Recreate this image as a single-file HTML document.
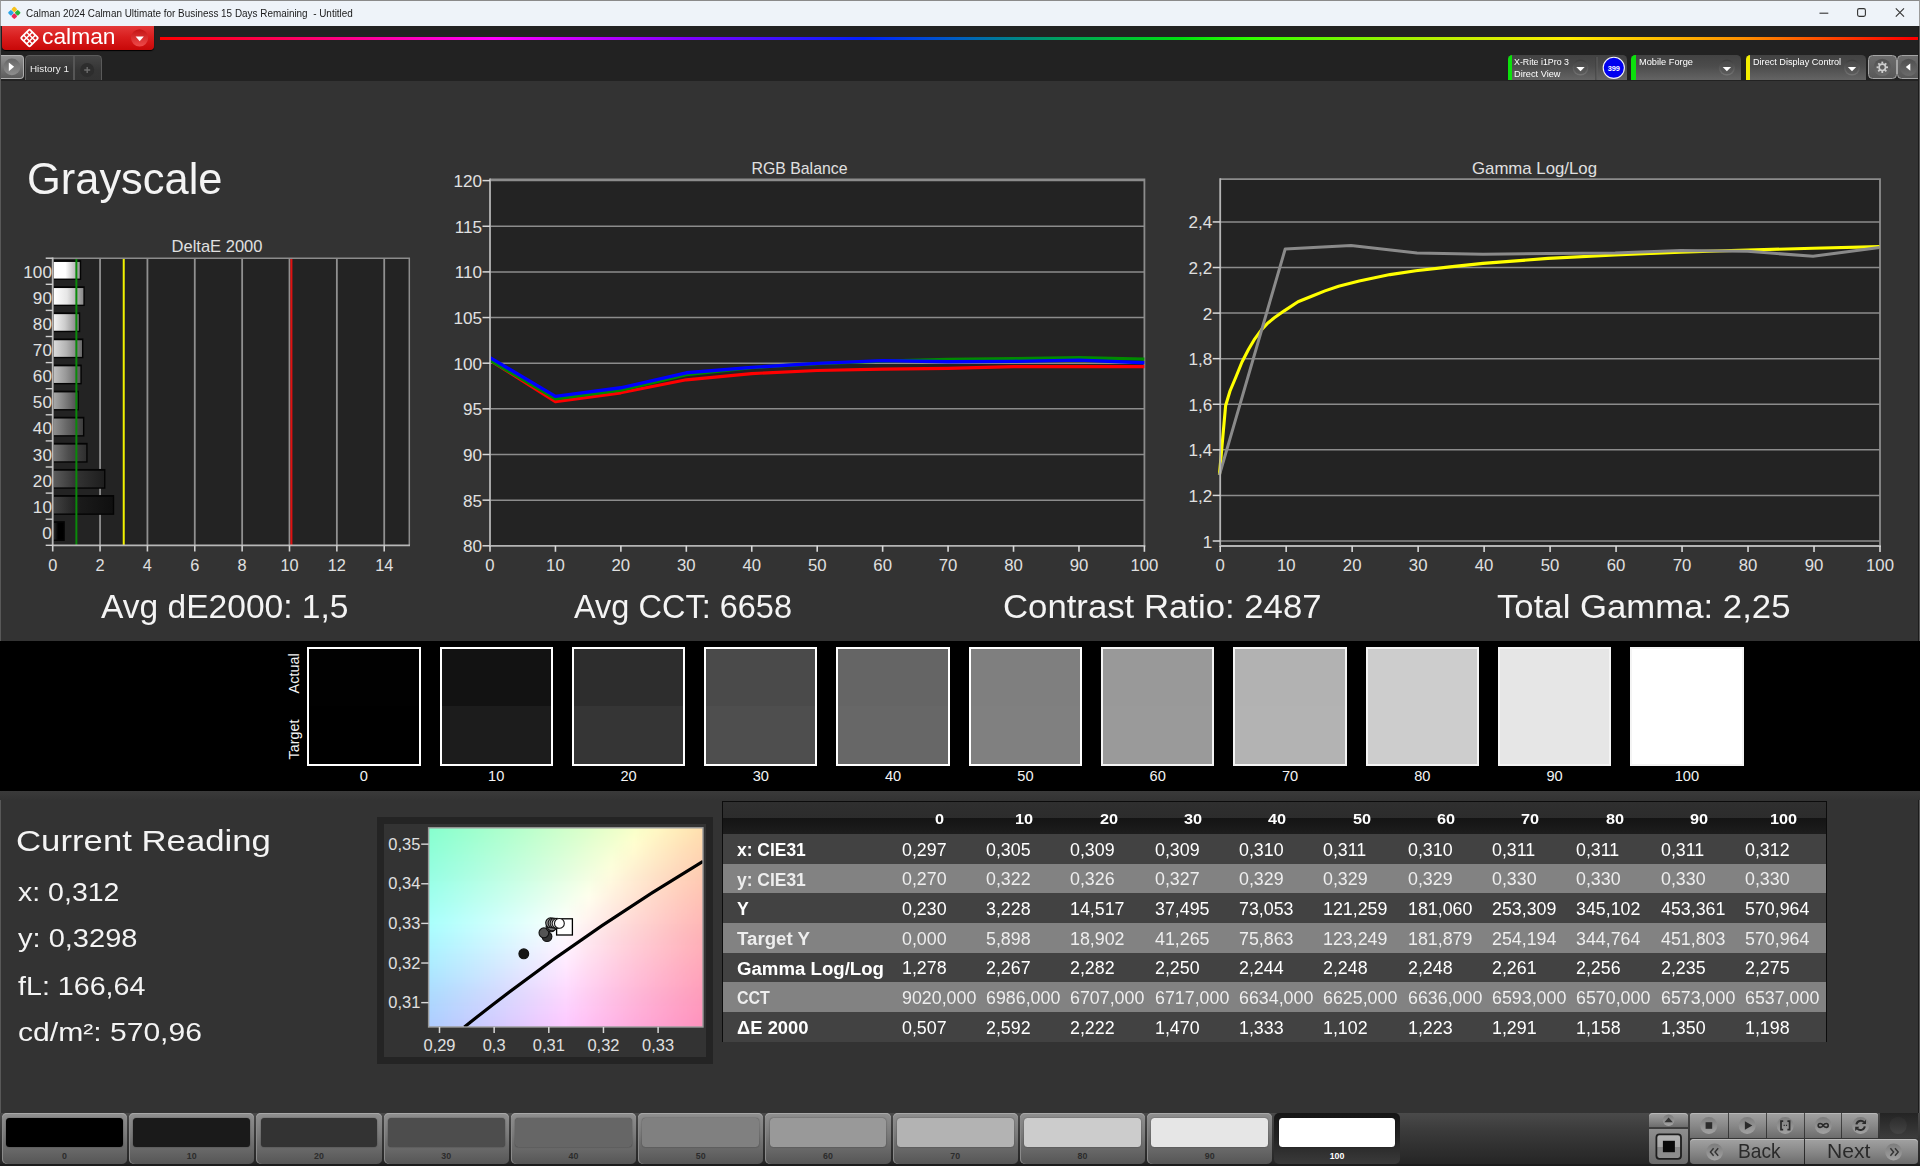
<!DOCTYPE html>
<html lang="en"><head><meta charset="utf-8"><title>Calman 2024 Calman Ultimate for Business - Untitled</title>
<style>
html,body{margin:0;padding:0;background:#333333;}
body{width:1920px;height:1166px;overflow:hidden;position:relative;font-family:"Liberation Sans",sans-serif;}
.t{position:absolute;white-space:pre;line-height:1;transform-origin:0 0;display:block;}
.ov{position:absolute;left:0;top:0;overflow:visible;}
svg text{font-family:"Liberation Sans",sans-serif;}
</style></head><body>
<!-- title bar -->
<div style="position:absolute;left:0.00px;top:0.00px;width:1920.00px;height:26.00px;background:#eef3f9;border-top:1px solid #8a8a8a;border-left:1px solid #9c9c9c;border-right:1px solid #9c9c9c;box-sizing:border-box;"></div>
<svg class="ov" width="1920" height="1166" viewBox="0 0 1920 1166">
<g transform="translate(14.3,12.8) rotate(45)">
<rect x="-4.6" y="-4.6" width="4.4" height="4.4" rx="1" fill="#f6c21c"/>
<rect x="0.2" y="-4.6" width="4.4" height="4.4" rx="1" fill="#2bb43a"/>
<rect x="-4.6" y="0.2" width="4.4" height="4.4" rx="1" fill="#2aa5e8"/>
<rect x="0.2" y="0.2" width="4.4" height="4.4" rx="1" fill="#ea2a5c"/>
</g>
<path d="M1819.5 13.2h8.8" stroke="#333" stroke-width="1.1" fill="none"/>
<rect x="1857.6" y="8.6" width="7.8" height="7.8" rx="1.6" fill="none" stroke="#333" stroke-width="1.1"/>
<path d="M1895.8 8.4l8.2 8.2M1904 8.4l-8.2 8.2" stroke="#333" stroke-width="1.1" fill="none"/>
</svg>
<span class="t" style="left:26.00px;top:6.98px;font-size:11.60px;color:#1a1a1a;transform:scaleX(0.8553);">Calman 2024 Calman Ultimate for Business 15 Days Remaining  - Untitled</span>
<!-- header band -->
<div style="position:absolute;left:0.00px;top:26.00px;width:1920.00px;height:54.60px;background:#222222;"></div>
<div style="position:absolute;left:160.00px;top:36.60px;width:1760.00px;height:3.20px;background:linear-gradient(90deg,#ff0000 0%,#ff0080 10%,#ff00ff 19%,#8000ff 30%,#0020ff 40%,#0060c0 45.5%,#00a060 51%,#00e010 58%,#30ff00 62%,#b0f000 72%,#ffee00 80%,#ff9000 90%,#ff0000 99.5%);"></div>
<div style="position:absolute;left:1.50px;top:26.00px;width:152.00px;height:24.30px;background:linear-gradient(180deg,#e43a3a 0%,#d81c1c 50%,#c80808 100%);border-radius:0 0 4px 4px;box-shadow:0 1px 1px #000;"></div>
<svg class="ov" width="1920" height="1166" viewBox="0 0 1920 1166">
<defs><linearGradient id="cdd" x1="0" y1="0" x2="0" y2="1"><stop offset="0" stop-color="#c41414"/><stop offset="1" stop-color="#ee4a4a"/></linearGradient></defs>
<g transform="translate(29.5,38) rotate(45)" fill="none" stroke="#fff">
<rect x="-6.2" y="-6.2" width="12.4" height="12.4" rx="1.2" stroke-width="1.8"/>
<path d="M-2.1 -6v12M2.1 -6v12M-6 -2.1h12M-6 2.1h12" stroke-width="1.5"/>
</g>
<circle cx="139.6" cy="37.8" r="8.6" fill="url(#cdd)"/>
<path d="M135.6 36.6h8.2l-4.1 4.6z" fill="#fff"/>
</svg>
<span class="t" style="left:41.80px;top:26.78px;font-size:21.40px;color:#fff;transform:scaleX(1.0668);">calman</span>
<div style="position:absolute;left:0.80px;top:55.00px;width:22.80px;height:24.00px;background:linear-gradient(180deg,#909090,#5c5c5c);border-radius:0 4px 4px 0;border:1px solid #b0b0b0;border-left:none;box-sizing:border-box;"></div>
<div style="position:absolute;left:25.00px;top:55.30px;width:77.30px;height:24.90px;background:linear-gradient(180deg,#454545,#353535 60%,#333);border-radius:4.5px 4.5px 0 0;border:1.4px solid #5a5a5a;border-bottom:none;box-sizing:border-box;"></div>
<div style="position:absolute;left:72.80px;top:56.40px;width:2.00px;height:23.80px;background:#565656;"></div>
<svg class="ov" width="1920" height="1166" viewBox="0 0 1920 1166">
<defs><linearGradient id="pl" x1="0" y1="0" x2="0" y2="1"><stop offset="0" stop-color="#666"/><stop offset="1" stop-color="#8e8e8e"/></linearGradient></defs>
<circle cx="11.9" cy="66.9" r="8.4" fill="url(#pl)"/>
<path d="M8.8 62.4v8.8l5.3-4.4z" fill="#fff"/>
<circle cx="87.2" cy="70" r="7" fill="#2d2d2d"/>
<path d="M84.2 70h6M87.2 67v6" stroke="#6c6c6c" stroke-width="1.4"/>
</svg>
<span class="t" style="left:30.40px;top:64.04px;font-size:9.40px;color:#f0f0f0;transform:scaleX(1.0516);">History 1</span>
<svg class="ov" width="1920" height="1166" viewBox="0 0 1920 1166"><defs><linearGradient id="dd" x1="0" y1="0" x2="0" y2="1"><stop offset="0" stop-color="#3a3a3a"/><stop offset="1" stop-color="#7a7a7a"/></linearGradient><linearGradient id="dd2" x1="0" y1="0" x2="0" y2="1"><stop offset="0" stop-color="#4a4a4a"/><stop offset="1" stop-color="#585858"/></linearGradient></defs></svg>
<div style="position:absolute;left:1507.70px;top:55.10px;width:119.30px;height:25.00px;background:linear-gradient(180deg,#424242 0%,#4c4c4c 45%,#646464 100%);border-radius:4.5px 4.5px 0 0;overflow:hidden;"><div style="position:absolute;left:0;top:0;width:4.4px;height:100%;background:#0ce00c;"></div></div>
<span class="t" style="left:1514.10px;top:56.77px;font-size:9.60px;color:#ffffff;transform:scaleX(0.9204);">X-Rite i1Pro 3</span>
<span class="t" style="left:1514.10px;top:69.07px;font-size:9.60px;color:#ffffff;transform:scaleX(0.9613);">Direct View</span>
<svg class="ov" width="1920" height="1166" viewBox="0 0 1920 1166"><circle cx="1580.5" cy="67.5" r="8.0" fill="url(#dd)" opacity="0.8"/><circle cx="1580.5" cy="67.5" r="6.6" fill="url(#dd2)" opacity="0.9"/><path d="M1576.3 67.1h8.4l-4.2 4.2z" fill="#fff"/><path d="M1596 57v23" stroke="#3c3c3c" stroke-width="1"/><path d="M1597 57v23" stroke="#606060" stroke-width="1"/></svg>
<div style="position:absolute;left:1631.30px;top:55.10px;width:109.30px;height:25.00px;background:linear-gradient(180deg,#424242 0%,#4c4c4c 45%,#646464 100%);border-radius:4.5px 4.5px 0 0;overflow:hidden;"><div style="position:absolute;left:0;top:0;width:4.4px;height:100%;background:#0ce00c;"></div></div>
<span class="t" style="left:1639.10px;top:56.77px;font-size:9.60px;color:#ffffff;transform:scaleX(0.9638);">Mobile Forge</span>
<svg class="ov" width="1920" height="1166" viewBox="0 0 1920 1166"><circle cx="1726.9" cy="67.5" r="8.0" fill="url(#dd)" opacity="0.8"/><circle cx="1726.9" cy="67.5" r="6.6" fill="url(#dd2)" opacity="0.9"/><path d="M1722.7 67.1h8.4l-4.2 4.2z" fill="#fff"/></svg>
<div style="position:absolute;left:1745.60px;top:55.10px;width:120.10px;height:25.00px;background:linear-gradient(180deg,#424242 0%,#4c4c4c 45%,#646464 100%);border-radius:4.5px 4.5px 0 0;overflow:hidden;"><div style="position:absolute;left:0;top:0;width:4.4px;height:100%;background:#f4ee00;"></div></div>
<span class="t" style="left:1753.10px;top:56.77px;font-size:9.60px;color:#ffffff;transform:scaleX(0.9501);">Direct Display Control</span>
<svg class="ov" width="1920" height="1166" viewBox="0 0 1920 1166"><circle cx="1852.0" cy="67.5" r="8.0" fill="url(#dd)" opacity="0.8"/><circle cx="1852.0" cy="67.5" r="6.6" fill="url(#dd2)" opacity="0.9"/><path d="M1847.8 67.1h8.4l-4.2 4.2z" fill="#fff"/></svg>
<svg class="ov" width="1920" height="1166" viewBox="0 0 1920 1166"><circle cx="1613.8" cy="67.8" r="10.6" fill="#0000f0" stroke="#f4f4f4" stroke-width="1.1"/><text x="1613.80" y="70.50" font-size="7.40" fill="#fff" text-anchor="middle" font-weight="bold">399</text></svg>
<div style="position:absolute;left:1868.00px;top:55.30px;width:28.50px;height:23.70px;background:linear-gradient(180deg,#6c6c6c,#585858);border:1px solid #a4a4a4;border-radius:4.5px;box-sizing:border-box;"></div>
<div style="position:absolute;left:1896.80px;top:55.30px;width:26.00px;height:23.70px;background:linear-gradient(180deg,#6c6c6c,#585858);border:1px solid #a4a4a4;border-radius:4.5px 0 0 4.5px;box-sizing:border-box;"></div>
<svg class="ov" width="1920" height="1166" viewBox="0 0 1920 1166"><circle cx="1882.3" cy="67.3" r="8.6" fill="url(#dd)" opacity="0.55"/><g transform="translate(1882.3,67.3)"><circle r="3.2" fill="none" stroke="#cecece" stroke-width="1.6"/><rect x="-0.9" y="-5.7" width="1.8" height="2.0" fill="#cecece" transform="rotate(0)"/><rect x="-0.9" y="-5.7" width="1.8" height="2.0" fill="#cecece" transform="rotate(45)"/><rect x="-0.9" y="-5.7" width="1.8" height="2.0" fill="#cecece" transform="rotate(90)"/><rect x="-0.9" y="-5.7" width="1.8" height="2.0" fill="#cecece" transform="rotate(135)"/><rect x="-0.9" y="-5.7" width="1.8" height="2.0" fill="#cecece" transform="rotate(180)"/><rect x="-0.9" y="-5.7" width="1.8" height="2.0" fill="#cecece" transform="rotate(225)"/><rect x="-0.9" y="-5.7" width="1.8" height="2.0" fill="#cecece" transform="rotate(270)"/><rect x="-0.9" y="-5.7" width="1.8" height="2.0" fill="#cecece" transform="rotate(315)"/></g><circle cx="1908.6" cy="67.3" r="8.6" fill="url(#dd)" opacity="0.55"/><path d="M1910.3 63.4v7.4l-4.5-3.7z" fill="#fff"/></svg>
<div style="position:absolute;left:0.00px;top:26.00px;width:1.00px;height:1140.00px;background:#585858;"></div>
<div style="position:absolute;left:1918.20px;top:26.00px;width:1.80px;height:1140.00px;background:linear-gradient(90deg,#1c1c1c 0,#1c1c1c 45%,#5a5a5a 45%,#5a5a5a 100%);"></div>
<!-- headings -->
<span class="t" style="left:27.40px;top:156.74px;font-size:44.60px;color:#f4f4f4;transform:scaleX(0.9738);">Grayscale</span>
<span class="t" style="left:101.00px;top:589.66px;font-size:33.00px;color:#f4f4f4;transform:scaleX(1.0167);">Avg dE2000: 1,5</span>
<span class="t" style="left:573.50px;top:589.66px;font-size:33.00px;color:#f4f4f4;transform:scaleX(0.9849);">Avg CCT: 6658</span>
<span class="t" style="left:1002.80px;top:589.66px;font-size:33.00px;color:#f4f4f4;transform:scaleX(1.0523);">Contrast Ratio: 2487</span>
<span class="t" style="left:1497.00px;top:589.66px;font-size:33.00px;color:#f4f4f4;transform:scaleX(1.0527);">Total Gamma: 2,25</span>
<!-- DeltaE 2000 chart -->
<svg class="ov" width="1920" height="1166" viewBox="0 0 1920 1166"><defs><linearGradient id="b0" x1="0" y1="0" x2="1" y2="0"><stop offset="0" stop-color="rgb(40,40,40)"/><stop offset="0.45" stop-color="rgb(0,0,0)"/><stop offset="1" stop-color="rgb(0,0,0)"/></linearGradient><linearGradient id="b1" x1="0" y1="0" x2="1" y2="0"><stop offset="0" stop-color="rgb(66,66,66)"/><stop offset="0.45" stop-color="rgb(26,26,26)"/><stop offset="1" stop-color="rgb(15,15,15)"/></linearGradient><linearGradient id="b2" x1="0" y1="0" x2="1" y2="0"><stop offset="0" stop-color="rgb(91,91,91)"/><stop offset="0.45" stop-color="rgb(51,51,51)"/><stop offset="1" stop-color="rgb(30,30,30)"/></linearGradient><linearGradient id="b3" x1="0" y1="0" x2="1" y2="0"><stop offset="0" stop-color="rgb(117,117,117)"/><stop offset="0.45" stop-color="rgb(77,77,77)"/><stop offset="1" stop-color="rgb(46,46,46)"/></linearGradient><linearGradient id="b4" x1="0" y1="0" x2="1" y2="0"><stop offset="0" stop-color="rgb(142,142,142)"/><stop offset="0.45" stop-color="rgb(102,102,102)"/><stop offset="1" stop-color="rgb(61,61,61)"/></linearGradient><linearGradient id="b5" x1="0" y1="0" x2="1" y2="0"><stop offset="0" stop-color="rgb(168,168,168)"/><stop offset="0.45" stop-color="rgb(128,128,128)"/><stop offset="1" stop-color="rgb(76,76,76)"/></linearGradient><linearGradient id="b6" x1="0" y1="0" x2="1" y2="0"><stop offset="0" stop-color="rgb(193,193,193)"/><stop offset="0.45" stop-color="rgb(153,153,153)"/><stop offset="1" stop-color="rgb(91,91,91)"/></linearGradient><linearGradient id="b7" x1="0" y1="0" x2="1" y2="0"><stop offset="0" stop-color="rgb(219,219,219)"/><stop offset="0.45" stop-color="rgb(179,179,179)"/><stop offset="1" stop-color="rgb(107,107,107)"/></linearGradient><linearGradient id="b8" x1="0" y1="0" x2="1" y2="0"><stop offset="0" stop-color="rgb(244,244,244)"/><stop offset="0.45" stop-color="rgb(204,204,204)"/><stop offset="1" stop-color="rgb(122,122,122)"/></linearGradient><linearGradient id="b9" x1="0" y1="0" x2="1" y2="0"><stop offset="0" stop-color="rgb(255,255,255)"/><stop offset="0.45" stop-color="rgb(230,230,230)"/><stop offset="1" stop-color="rgb(138,138,138)"/></linearGradient><linearGradient id="b10" x1="0" y1="0" x2="1" y2="0"><stop offset="0" stop-color="rgb(255,255,255)"/><stop offset="0.45" stop-color="rgb(255,255,255)"/><stop offset="1" stop-color="rgb(153,153,153)"/></linearGradient></defs><rect x="52.7" y="258.2" width="356.6" height="287.09999999999997" fill="#232323"/><path d="M100.06 258.2V545.3" stroke="#909090" stroke-width="1.8"/><path d="M147.42 258.2V545.3" stroke="#909090" stroke-width="1.8"/><path d="M194.78 258.2V545.3" stroke="#909090" stroke-width="1.8"/><path d="M242.14 258.2V545.3" stroke="#909090" stroke-width="1.8"/><path d="M289.50 258.2V545.3" stroke="#909090" stroke-width="1.8"/><path d="M336.86 258.2V545.3" stroke="#909090" stroke-width="1.8"/><path d="M384.22 258.2V545.3" stroke="#909090" stroke-width="1.8"/><rect x="53.70" y="521.15" width="11.11" height="19.8" fill="#040404"/><rect x="53.70" y="522.95" width="9.71" height="16.6" fill="url(#b0)"/><rect x="53.70" y="495.05" width="60.48" height="19.8" fill="#040404"/><rect x="53.70" y="496.85" width="59.08" height="16.6" fill="url(#b1)"/><rect x="53.70" y="468.95" width="51.72" height="19.8" fill="#040404"/><rect x="53.70" y="470.75" width="50.32" height="16.6" fill="url(#b2)"/><rect x="53.70" y="442.85" width="33.91" height="19.8" fill="#040404"/><rect x="53.70" y="444.65" width="32.51" height="16.6" fill="url(#b3)"/><rect x="53.70" y="416.75" width="30.67" height="19.8" fill="#040404"/><rect x="53.70" y="418.55" width="29.27" height="16.6" fill="url(#b4)"/><rect x="53.70" y="390.65" width="25.20" height="19.8" fill="#040404"/><rect x="53.70" y="392.45" width="23.80" height="16.6" fill="url(#b5)"/><rect x="53.70" y="364.55" width="28.06" height="19.8" fill="#040404"/><rect x="53.70" y="366.35" width="26.66" height="16.6" fill="url(#b6)"/><rect x="53.70" y="338.45" width="29.67" height="19.8" fill="#040404"/><rect x="53.70" y="340.25" width="28.27" height="16.6" fill="url(#b7)"/><rect x="53.70" y="312.35" width="26.52" height="19.8" fill="#040404"/><rect x="53.70" y="314.15" width="25.12" height="16.6" fill="url(#b8)"/><rect x="53.70" y="286.25" width="31.07" height="19.8" fill="#040404"/><rect x="53.70" y="288.05" width="29.67" height="16.6" fill="url(#b9)"/><rect x="53.70" y="260.15" width="27.47" height="19.8" fill="#040404"/><rect x="53.70" y="261.95" width="26.07" height="16.6" fill="url(#b10)"/><path d="M76.38 258.2V545.3" stroke="#0a8a0a" stroke-width="2"/><path d="M123.74 258.2V545.3" stroke="#f2f200" stroke-width="2"/><path d="M291.40 258.2V545.3" stroke="#e01010" stroke-width="2"/><path d="M52.7 258.2H409.3V545.3" stroke="#8c8c8c" stroke-width="1.5" fill="none"/><path d="M52.7 257.5V546.1999999999999M51.800000000000004 545.3H410.0" stroke="#b8b8b8" stroke-width="1.8" fill="none"/><path d="M45.7 545.30H52.7" stroke="#d0d0d0" stroke-width="1.4"/><path d="M45.7 519.20H52.7" stroke="#d0d0d0" stroke-width="1.4"/><path d="M45.7 493.10H52.7" stroke="#d0d0d0" stroke-width="1.4"/><path d="M45.7 467.00H52.7" stroke="#d0d0d0" stroke-width="1.4"/><path d="M45.7 440.90H52.7" stroke="#d0d0d0" stroke-width="1.4"/><path d="M45.7 414.80H52.7" stroke="#d0d0d0" stroke-width="1.4"/><path d="M45.7 388.70H52.7" stroke="#d0d0d0" stroke-width="1.4"/><path d="M45.7 362.60H52.7" stroke="#d0d0d0" stroke-width="1.4"/><path d="M45.7 336.50H52.7" stroke="#d0d0d0" stroke-width="1.4"/><path d="M45.7 310.40H52.7" stroke="#d0d0d0" stroke-width="1.4"/><path d="M45.7 284.30H52.7" stroke="#d0d0d0" stroke-width="1.4"/><path d="M45.7 258.20H52.7" stroke="#d0d0d0" stroke-width="1.4"/><text x="51.90" y="538.85" font-size="16.60" fill="#e0e0e0" text-anchor="end" textLength="9.51" lengthAdjust="spacingAndGlyphs">0</text><text x="51.90" y="512.75" font-size="16.60" fill="#e0e0e0" text-anchor="end" textLength="19.02" lengthAdjust="spacingAndGlyphs">10</text><text x="51.90" y="486.65" font-size="16.60" fill="#e0e0e0" text-anchor="end" textLength="19.02" lengthAdjust="spacingAndGlyphs">20</text><text x="51.90" y="460.55" font-size="16.60" fill="#e0e0e0" text-anchor="end" textLength="19.02" lengthAdjust="spacingAndGlyphs">30</text><text x="51.90" y="434.45" font-size="16.60" fill="#e0e0e0" text-anchor="end" textLength="19.02" lengthAdjust="spacingAndGlyphs">40</text><text x="51.90" y="408.35" font-size="16.60" fill="#e0e0e0" text-anchor="end" textLength="19.02" lengthAdjust="spacingAndGlyphs">50</text><text x="51.90" y="382.25" font-size="16.60" fill="#e0e0e0" text-anchor="end" textLength="19.02" lengthAdjust="spacingAndGlyphs">60</text><text x="51.90" y="356.15" font-size="16.60" fill="#e0e0e0" text-anchor="end" textLength="19.02" lengthAdjust="spacingAndGlyphs">70</text><text x="51.90" y="330.05" font-size="16.60" fill="#e0e0e0" text-anchor="end" textLength="19.02" lengthAdjust="spacingAndGlyphs">80</text><text x="51.90" y="303.95" font-size="16.60" fill="#e0e0e0" text-anchor="end" textLength="19.02" lengthAdjust="spacingAndGlyphs">90</text><text x="51.90" y="277.85" font-size="16.60" fill="#e0e0e0" text-anchor="end" textLength="28.53" lengthAdjust="spacingAndGlyphs">100</text><path d="M52.70 545.3V551.5" stroke="#d0d0d0" stroke-width="1.6"/><text x="52.70" y="570.60" font-size="16.00" fill="#e0e0e0" text-anchor="middle" textLength="9.08" lengthAdjust="spacingAndGlyphs">0</text><path d="M100.06 545.3V551.5" stroke="#d0d0d0" stroke-width="1.6"/><text x="100.06" y="570.60" font-size="16.00" fill="#e0e0e0" text-anchor="middle" textLength="9.08" lengthAdjust="spacingAndGlyphs">2</text><path d="M147.42 545.3V551.5" stroke="#d0d0d0" stroke-width="1.6"/><text x="147.42" y="570.60" font-size="16.00" fill="#e0e0e0" text-anchor="middle" textLength="9.08" lengthAdjust="spacingAndGlyphs">4</text><path d="M194.78 545.3V551.5" stroke="#d0d0d0" stroke-width="1.6"/><text x="194.78" y="570.60" font-size="16.00" fill="#e0e0e0" text-anchor="middle" textLength="9.08" lengthAdjust="spacingAndGlyphs">6</text><path d="M242.14 545.3V551.5" stroke="#d0d0d0" stroke-width="1.6"/><text x="242.14" y="570.60" font-size="16.00" fill="#e0e0e0" text-anchor="middle" textLength="9.08" lengthAdjust="spacingAndGlyphs">8</text><path d="M289.50 545.3V551.5" stroke="#d0d0d0" stroke-width="1.6"/><text x="289.50" y="570.60" font-size="16.00" fill="#e0e0e0" text-anchor="middle" textLength="18.15" lengthAdjust="spacingAndGlyphs">10</text><path d="M336.86 545.3V551.5" stroke="#d0d0d0" stroke-width="1.6"/><text x="336.86" y="570.60" font-size="16.00" fill="#e0e0e0" text-anchor="middle" textLength="18.15" lengthAdjust="spacingAndGlyphs">12</text><path d="M384.22 545.3V551.5" stroke="#d0d0d0" stroke-width="1.6"/><text x="384.22" y="570.60" font-size="16.00" fill="#e0e0e0" text-anchor="middle" textLength="18.15" lengthAdjust="spacingAndGlyphs">14</text><text x="217.00" y="252.20" font-size="16.60" fill="#e0e0e0" text-anchor="middle" textLength="91.00" lengthAdjust="spacingAndGlyphs">DeltaE 2000</text></svg>
<!-- RGB Balance chart -->
<svg class="ov" width="1920" height="1166" viewBox="0 0 1920 1166"><rect x="490.0" y="179.1" width="654.4000000000001" height="366.69999999999993" fill="#232323"/><path d="M490.0 500.15H1144.4" stroke="#8c8c8c" stroke-width="1.5"/><path d="M490.0 454.50H1144.4" stroke="#8c8c8c" stroke-width="1.5"/><path d="M490.0 408.85H1144.4" stroke="#8c8c8c" stroke-width="1.5"/><path d="M490.0 363.20H1144.4" stroke="#8c8c8c" stroke-width="1.5"/><path d="M490.0 317.55H1144.4" stroke="#8c8c8c" stroke-width="1.5"/><path d="M490.0 271.90H1144.4" stroke="#8c8c8c" stroke-width="1.5"/><path d="M490.0 226.25H1144.4" stroke="#8c8c8c" stroke-width="1.5"/><path d="M490.0 180.60H1144.4" stroke="#8c8c8c" stroke-width="1.5"/><path d="M490.0 179.4H1144.4V545.8" stroke="#8c8c8c" stroke-width="1.8" fill="none"/><path d="M490.0 360.3L555.4 401.6L620.8 392.8L686.3 379.8L751.7 373.6L817.2 370.5L882.6 369.2L948.0 368.4L1013.5 366.7L1078.9 366.6L1144.4 366.6" stroke="#ff0000" stroke-width="3.2" fill="none" stroke-linejoin="round"/><path d="M490.0 360.4L555.4 398.9L620.8 390.1L686.3 374.6L751.7 367.6L817.2 363.6L882.6 361.2L948.0 359.3L1013.5 358.6L1078.9 357.6L1144.4 359.2" stroke="#008a00" stroke-width="3.2" fill="none" stroke-linejoin="round"/><path d="M490.0 357.6L555.4 396.4L620.8 387.8L686.3 372.8L751.7 367.4L817.2 363.4L882.6 360.6L948.0 361.8L1013.5 361.4L1078.9 360.1L1144.4 362.8" stroke="#0000ff" stroke-width="3.4" fill="none" stroke-linejoin="round"/><path d="M490.0 178.6V546.6999999999999M489.1 545.8H1145.3000000000002" stroke="#b4b4b4" stroke-width="1.8" fill="none"/><path d="M482.5 545.80H490.0" stroke="#d8d8d8" stroke-width="1.5"/><text x="482.00" y="552.30" font-size="16.60" fill="#e0e0e0" text-anchor="end" textLength="19.02" lengthAdjust="spacingAndGlyphs">80</text><path d="M482.5 500.15H490.0" stroke="#d8d8d8" stroke-width="1.5"/><text x="482.00" y="506.65" font-size="16.60" fill="#e0e0e0" text-anchor="end" textLength="19.02" lengthAdjust="spacingAndGlyphs">85</text><path d="M482.5 454.50H490.0" stroke="#d8d8d8" stroke-width="1.5"/><text x="482.00" y="461.00" font-size="16.60" fill="#e0e0e0" text-anchor="end" textLength="19.02" lengthAdjust="spacingAndGlyphs">90</text><path d="M482.5 408.85H490.0" stroke="#d8d8d8" stroke-width="1.5"/><text x="482.00" y="415.35" font-size="16.60" fill="#e0e0e0" text-anchor="end" textLength="19.02" lengthAdjust="spacingAndGlyphs">95</text><path d="M482.5 363.20H490.0" stroke="#d8d8d8" stroke-width="1.5"/><text x="482.00" y="369.70" font-size="16.60" fill="#e0e0e0" text-anchor="end" textLength="28.53" lengthAdjust="spacingAndGlyphs">100</text><path d="M482.5 317.55H490.0" stroke="#d8d8d8" stroke-width="1.5"/><text x="482.00" y="324.05" font-size="16.60" fill="#e0e0e0" text-anchor="end" textLength="28.53" lengthAdjust="spacingAndGlyphs">105</text><path d="M482.5 271.90H490.0" stroke="#d8d8d8" stroke-width="1.5"/><text x="482.00" y="278.40" font-size="16.60" fill="#e0e0e0" text-anchor="end" textLength="27.26" lengthAdjust="spacingAndGlyphs">110</text><path d="M482.5 226.25H490.0" stroke="#d8d8d8" stroke-width="1.5"/><text x="482.00" y="232.75" font-size="16.60" fill="#e0e0e0" text-anchor="end" textLength="27.26" lengthAdjust="spacingAndGlyphs">115</text><path d="M482.5 180.60H490.0" stroke="#d8d8d8" stroke-width="1.5"/><text x="482.00" y="187.10" font-size="16.60" fill="#e0e0e0" text-anchor="end" textLength="28.53" lengthAdjust="spacingAndGlyphs">120</text><path d="M490.00 545.8V551.8" stroke="#d8d8d8" stroke-width="1.6"/><text x="490.00" y="571.00" font-size="16.40" fill="#e0e0e0" text-anchor="middle" textLength="9.30" lengthAdjust="spacingAndGlyphs">0</text><path d="M555.44 545.8V551.8" stroke="#d8d8d8" stroke-width="1.6"/><text x="555.44" y="571.00" font-size="16.40" fill="#e0e0e0" text-anchor="middle" textLength="18.61" lengthAdjust="spacingAndGlyphs">10</text><path d="M620.88 545.8V551.8" stroke="#d8d8d8" stroke-width="1.6"/><text x="620.88" y="571.00" font-size="16.40" fill="#e0e0e0" text-anchor="middle" textLength="18.61" lengthAdjust="spacingAndGlyphs">20</text><path d="M686.32 545.8V551.8" stroke="#d8d8d8" stroke-width="1.6"/><text x="686.32" y="571.00" font-size="16.40" fill="#e0e0e0" text-anchor="middle" textLength="18.61" lengthAdjust="spacingAndGlyphs">30</text><path d="M751.76 545.8V551.8" stroke="#d8d8d8" stroke-width="1.6"/><text x="751.76" y="571.00" font-size="16.40" fill="#e0e0e0" text-anchor="middle" textLength="18.61" lengthAdjust="spacingAndGlyphs">40</text><path d="M817.20 545.8V551.8" stroke="#d8d8d8" stroke-width="1.6"/><text x="817.20" y="571.00" font-size="16.40" fill="#e0e0e0" text-anchor="middle" textLength="18.61" lengthAdjust="spacingAndGlyphs">50</text><path d="M882.64 545.8V551.8" stroke="#d8d8d8" stroke-width="1.6"/><text x="882.64" y="571.00" font-size="16.40" fill="#e0e0e0" text-anchor="middle" textLength="18.61" lengthAdjust="spacingAndGlyphs">60</text><path d="M948.08 545.8V551.8" stroke="#d8d8d8" stroke-width="1.6"/><text x="948.08" y="571.00" font-size="16.40" fill="#e0e0e0" text-anchor="middle" textLength="18.61" lengthAdjust="spacingAndGlyphs">70</text><path d="M1013.52 545.8V551.8" stroke="#d8d8d8" stroke-width="1.6"/><text x="1013.52" y="571.00" font-size="16.40" fill="#e0e0e0" text-anchor="middle" textLength="18.61" lengthAdjust="spacingAndGlyphs">80</text><path d="M1078.96 545.8V551.8" stroke="#d8d8d8" stroke-width="1.6"/><text x="1078.96" y="571.00" font-size="16.40" fill="#e0e0e0" text-anchor="middle" textLength="18.61" lengthAdjust="spacingAndGlyphs">90</text><path d="M1144.40 545.8V551.8" stroke="#d8d8d8" stroke-width="1.6"/><text x="1144.40" y="571.00" font-size="16.40" fill="#e0e0e0" text-anchor="middle" textLength="27.91" lengthAdjust="spacingAndGlyphs">100</text><text x="799.50" y="173.60" font-size="16.60" fill="#e0e0e0" text-anchor="middle" textLength="96.00" lengthAdjust="spacingAndGlyphs">RGB Balance</text></svg>
<!-- Gamma Log/Log chart -->
<svg class="ov" width="1920" height="1166" viewBox="0 0 1920 1166"><rect x="1220.2" y="179.2" width="659.8" height="366.8" fill="#232323"/><path d="M1220.2 541.00H1880.0" stroke="#8c8c8c" stroke-width="1.5"/><path d="M1220.2 495.42H1880.0" stroke="#8c8c8c" stroke-width="1.5"/><path d="M1220.2 449.84H1880.0" stroke="#8c8c8c" stroke-width="1.5"/><path d="M1220.2 404.26H1880.0" stroke="#8c8c8c" stroke-width="1.5"/><path d="M1220.2 358.68H1880.0" stroke="#8c8c8c" stroke-width="1.5"/><path d="M1220.2 313.10H1880.0" stroke="#8c8c8c" stroke-width="1.5"/><path d="M1220.2 267.52H1880.0" stroke="#8c8c8c" stroke-width="1.5"/><path d="M1220.2 221.94H1880.0" stroke="#8c8c8c" stroke-width="1.5"/><path d="M1220.2 179.2H1880.0V546.0" stroke="#8c8c8c" stroke-width="1.8" fill="none"/><path d="M1219.4 475.0L1225.6 405.8L1230.0 391.0L1235.7 377.5L1242.0 362.0L1248.6 349.2L1254.8 338.8L1261.4 329.9L1267.6 323.2L1274.3 317.8L1284.6 310.6L1298.0 301.8L1312.9 295.7L1325.0 290.9L1338.6 286.2L1359.2 281.0L1390.0 274.6L1415.8 270.7L1450.0 266.9L1483.0 263.4L1548.0 258.4L1615.0 255.0L1680.5 252.1L1747.7 250.0L1813.0 248.3L1879.4 246.6" stroke="#ffff00" stroke-width="3.1" fill="none" stroke-linejoin="round"/><path d="M1219.4 475.2L1285.2 249.0L1351.0 245.5L1417.0 253.0L1483.0 254.3L1548.5 253.4L1615.2 252.9L1680.6 250.4L1747.6 251.3L1813.0 256.3L1879.4 247.5" stroke="#8a8a8a" stroke-width="3.0" fill="none" stroke-linejoin="round"/><path d="M1220.2 178.29999999999998V546.9M1219.3 546.0H1880.9" stroke="#b4b4b4" stroke-width="1.8" fill="none"/><path d="M1212.7 541.00H1220.2" stroke="#d8d8d8" stroke-width="1.5"/><text x="1212.20" y="547.50" font-size="16.60" fill="#e0e0e0" text-anchor="end" textLength="9.51" lengthAdjust="spacingAndGlyphs">1</text><path d="M1212.7 495.42H1220.2" stroke="#d8d8d8" stroke-width="1.5"/><text x="1212.20" y="501.92" font-size="16.60" fill="#e0e0e0" text-anchor="end" textLength="23.77" lengthAdjust="spacingAndGlyphs">1,2</text><path d="M1212.7 449.84H1220.2" stroke="#d8d8d8" stroke-width="1.5"/><text x="1212.20" y="456.34" font-size="16.60" fill="#e0e0e0" text-anchor="end" textLength="23.77" lengthAdjust="spacingAndGlyphs">1,4</text><path d="M1212.7 404.26H1220.2" stroke="#d8d8d8" stroke-width="1.5"/><text x="1212.20" y="410.76" font-size="16.60" fill="#e0e0e0" text-anchor="end" textLength="23.77" lengthAdjust="spacingAndGlyphs">1,6</text><path d="M1212.7 358.68H1220.2" stroke="#d8d8d8" stroke-width="1.5"/><text x="1212.20" y="365.18" font-size="16.60" fill="#e0e0e0" text-anchor="end" textLength="23.77" lengthAdjust="spacingAndGlyphs">1,8</text><path d="M1212.7 313.10H1220.2" stroke="#d8d8d8" stroke-width="1.5"/><text x="1212.20" y="319.60" font-size="16.60" fill="#e0e0e0" text-anchor="end" textLength="9.51" lengthAdjust="spacingAndGlyphs">2</text><path d="M1212.7 267.52H1220.2" stroke="#d8d8d8" stroke-width="1.5"/><text x="1212.20" y="274.02" font-size="16.60" fill="#e0e0e0" text-anchor="end" textLength="23.77" lengthAdjust="spacingAndGlyphs">2,2</text><path d="M1212.7 221.94H1220.2" stroke="#d8d8d8" stroke-width="1.5"/><text x="1212.20" y="228.44" font-size="16.60" fill="#e0e0e0" text-anchor="end" textLength="23.77" lengthAdjust="spacingAndGlyphs">2,4</text><path d="M1220.20 546.0V552.0" stroke="#d8d8d8" stroke-width="1.6"/><text x="1220.20" y="571.00" font-size="16.40" fill="#e0e0e0" text-anchor="middle" textLength="9.30" lengthAdjust="spacingAndGlyphs">0</text><path d="M1286.18 546.0V552.0" stroke="#d8d8d8" stroke-width="1.6"/><text x="1286.18" y="571.00" font-size="16.40" fill="#e0e0e0" text-anchor="middle" textLength="18.61" lengthAdjust="spacingAndGlyphs">10</text><path d="M1352.16 546.0V552.0" stroke="#d8d8d8" stroke-width="1.6"/><text x="1352.16" y="571.00" font-size="16.40" fill="#e0e0e0" text-anchor="middle" textLength="18.61" lengthAdjust="spacingAndGlyphs">20</text><path d="M1418.14 546.0V552.0" stroke="#d8d8d8" stroke-width="1.6"/><text x="1418.14" y="571.00" font-size="16.40" fill="#e0e0e0" text-anchor="middle" textLength="18.61" lengthAdjust="spacingAndGlyphs">30</text><path d="M1484.12 546.0V552.0" stroke="#d8d8d8" stroke-width="1.6"/><text x="1484.12" y="571.00" font-size="16.40" fill="#e0e0e0" text-anchor="middle" textLength="18.61" lengthAdjust="spacingAndGlyphs">40</text><path d="M1550.10 546.0V552.0" stroke="#d8d8d8" stroke-width="1.6"/><text x="1550.10" y="571.00" font-size="16.40" fill="#e0e0e0" text-anchor="middle" textLength="18.61" lengthAdjust="spacingAndGlyphs">50</text><path d="M1616.08 546.0V552.0" stroke="#d8d8d8" stroke-width="1.6"/><text x="1616.08" y="571.00" font-size="16.40" fill="#e0e0e0" text-anchor="middle" textLength="18.61" lengthAdjust="spacingAndGlyphs">60</text><path d="M1682.06 546.0V552.0" stroke="#d8d8d8" stroke-width="1.6"/><text x="1682.06" y="571.00" font-size="16.40" fill="#e0e0e0" text-anchor="middle" textLength="18.61" lengthAdjust="spacingAndGlyphs">70</text><path d="M1748.04 546.0V552.0" stroke="#d8d8d8" stroke-width="1.6"/><text x="1748.04" y="571.00" font-size="16.40" fill="#e0e0e0" text-anchor="middle" textLength="18.61" lengthAdjust="spacingAndGlyphs">80</text><path d="M1814.02 546.0V552.0" stroke="#d8d8d8" stroke-width="1.6"/><text x="1814.02" y="571.00" font-size="16.40" fill="#e0e0e0" text-anchor="middle" textLength="18.61" lengthAdjust="spacingAndGlyphs">90</text><path d="M1880.00 546.0V552.0" stroke="#d8d8d8" stroke-width="1.6"/><text x="1880.00" y="571.00" font-size="16.40" fill="#e0e0e0" text-anchor="middle" textLength="27.91" lengthAdjust="spacingAndGlyphs">100</text><text x="1534.50" y="173.60" font-size="16.60" fill="#e0e0e0" text-anchor="middle" textLength="125.00" lengthAdjust="spacingAndGlyphs">Gamma Log/Log</text></svg>
<!-- actual / target swatches -->
<div style="position:absolute;left:0.00px;top:640.80px;width:1920.00px;height:150.20px;background:#000;"></div>
<div style="position:absolute;left:0.00px;top:791.00px;width:1920.00px;height:9.00px;background:linear-gradient(180deg,#3a3a3a,#333);"></div>
<div style="position:absolute;left:307.20px;top:647.20px;width:113.40px;height:118.40px;box-sizing:border-box;border:2px solid #ffffff;background:linear-gradient(180deg,rgb(1,1,1) 0,rgb(1,1,1) 49.6%,rgb(0,0,0) 49.6%,rgb(0,0,0) 100%);"></div>
<span class="t" style="left:359.84px;top:769.24px;font-size:14.60px;color:#f4f4f4;">0</span>
<div style="position:absolute;left:439.50px;top:647.20px;width:113.40px;height:118.40px;box-sizing:border-box;border:2px solid #ffffff;background:linear-gradient(180deg,rgb(18,18,18) 0,rgb(18,18,18) 49.6%,rgb(28,28,28) 49.6%,rgb(28,28,28) 100%);"></div>
<span class="t" style="left:488.08px;top:769.24px;font-size:14.60px;color:#f4f4f4;">10</span>
<div style="position:absolute;left:571.80px;top:647.20px;width:113.40px;height:118.40px;box-sizing:border-box;border:2px solid #ffffff;background:linear-gradient(180deg,rgb(45,45,45) 0,rgb(45,45,45) 49.6%,rgb(53,53,53) 49.6%,rgb(53,53,53) 100%);"></div>
<span class="t" style="left:620.38px;top:769.24px;font-size:14.60px;color:#f4f4f4;">20</span>
<div style="position:absolute;left:704.10px;top:647.20px;width:113.40px;height:118.40px;box-sizing:border-box;border:2px solid #ffffff;background:linear-gradient(180deg,rgb(74,74,74) 0,rgb(74,74,74) 49.6%,rgb(78,78,78) 49.6%,rgb(78,78,78) 100%);"></div>
<span class="t" style="left:752.68px;top:769.24px;font-size:14.60px;color:#f4f4f4;">30</span>
<div style="position:absolute;left:836.40px;top:647.20px;width:113.40px;height:118.40px;box-sizing:border-box;border:2px solid #ffffff;background:linear-gradient(180deg,rgb(101,101,101) 0,rgb(101,101,101) 49.6%,rgb(103,103,103) 49.6%,rgb(103,103,103) 100%);"></div>
<span class="t" style="left:884.98px;top:769.24px;font-size:14.60px;color:#f4f4f4;">40</span>
<div style="position:absolute;left:968.70px;top:647.20px;width:113.40px;height:118.40px;box-sizing:border-box;border:2px solid #ffffff;background:linear-gradient(180deg,rgb(127,127,127) 0,rgb(127,127,127) 49.6%,rgb(128,128,128) 49.6%,rgb(128,128,128) 100%);"></div>
<span class="t" style="left:1017.28px;top:769.24px;font-size:14.60px;color:#f4f4f4;">50</span>
<div style="position:absolute;left:1101.00px;top:647.20px;width:113.40px;height:118.40px;box-sizing:border-box;border:2px solid #f4f4f4;background:linear-gradient(180deg,rgb(153,153,153) 0,rgb(153,153,153) 49.6%,rgb(154,154,154) 49.6%,rgb(154,154,154) 100%);"></div>
<span class="t" style="left:1149.58px;top:769.24px;font-size:14.60px;color:#f4f4f4;">60</span>
<div style="position:absolute;left:1233.30px;top:647.20px;width:113.40px;height:118.40px;box-sizing:border-box;border:2px solid #f4f4f4;background:linear-gradient(180deg,rgb(178,178,178) 0,rgb(178,178,178) 49.6%,rgb(179,179,179) 49.6%,rgb(179,179,179) 100%);"></div>
<span class="t" style="left:1281.88px;top:769.24px;font-size:14.60px;color:#f4f4f4;">70</span>
<div style="position:absolute;left:1365.60px;top:647.20px;width:113.40px;height:118.40px;box-sizing:border-box;border:2px solid #f4f4f4;background:linear-gradient(180deg,rgb(205,205,205) 0,rgb(205,205,205) 49.6%,rgb(205,205,205) 49.6%,rgb(205,205,205) 100%);"></div>
<span class="t" style="left:1414.18px;top:769.24px;font-size:14.60px;color:#f4f4f4;">80</span>
<div style="position:absolute;left:1497.90px;top:647.20px;width:113.40px;height:118.40px;box-sizing:border-box;border:2px solid #f4f4f4;background:linear-gradient(180deg,rgb(230,230,230) 0,rgb(230,230,230) 49.6%,rgb(230,230,230) 49.6%,rgb(230,230,230) 100%);"></div>
<span class="t" style="left:1546.48px;top:769.24px;font-size:14.60px;color:#f4f4f4;">90</span>
<div style="position:absolute;left:1630.20px;top:647.20px;width:113.40px;height:118.40px;box-sizing:border-box;border:2px solid #f4f4f4;background:linear-gradient(180deg,rgb(255,255,255) 0,rgb(255,255,255) 49.6%,rgb(255,255,255) 49.6%,rgb(255,255,255) 100%);"></div>
<span class="t" style="left:1674.72px;top:769.24px;font-size:14.60px;color:#f4f4f4;">100</span>
<svg class="ov" width="1920" height="1166" viewBox="0 0 1920 1166"><g transform="translate(299.4,693.4) rotate(-90)"><text x="0.00" y="0.00" font-size="14.60" fill="#f4f4f4" text-anchor="start" textLength="40.00" lengthAdjust="spacingAndGlyphs">Actual</text></g><g transform="translate(299.4,759.4) rotate(-90)"><text x="0.00" y="0.00" font-size="14.60" fill="#f4f4f4" text-anchor="start" textLength="40.00" lengthAdjust="spacingAndGlyphs">Target</text></g></svg>
<!-- current reading -->
<span class="t" style="left:16.40px;top:826.34px;font-size:29.60px;color:#f4f4f4;transform:scaleX(1.1741);">Current Reading</span>
<span class="t" style="left:18.00px;top:878.65px;font-size:26.40px;color:#f4f4f4;transform:scaleX(1.0805);">x: 0,312</span>
<span class="t" style="left:18.40px;top:925.05px;font-size:26.40px;color:#f4f4f4;transform:scaleX(1.1002);">y: 0,3298</span>
<span class="t" style="left:18.40px;top:972.95px;font-size:26.40px;color:#f4f4f4;transform:scaleX(1.0857);">fL: 166,64</span>
<span class="t" style="left:17.80px;top:1019.45px;font-size:26.40px;color:#f4f4f4;transform:scaleX(1.1399);">cd/m²: 570,96</span>
<!-- CIE xy chart -->
<div style="position:absolute;left:377.00px;top:816.60px;width:336.20px;height:247.20px;box-sizing:border-box;border:7.8px solid #242424;background:#333;"></div>
<svg class="ov" width="1920" height="1166" viewBox="0 0 1920 1166"><defs><linearGradient id="cg0" gradientUnits="userSpaceOnUse" x1="428.6" y1="0" x2="703.0" y2="0"><stop offset="0.0000" stop-color="#85ffcc"/><stop offset="0.0833" stop-color="#90ffcb"/><stop offset="0.1667" stop-color="#9cffcb"/><stop offset="0.2500" stop-color="#a8ffca"/><stop offset="0.3333" stop-color="#b4ffca"/><stop offset="0.4167" stop-color="#c1ffc9"/><stop offset="0.5000" stop-color="#ceffc8"/><stop offset="0.5833" stop-color="#dbffc8"/><stop offset="0.6667" stop-color="#e8ffc7"/><stop offset="0.7500" stop-color="#f6ffc7"/><stop offset="0.8333" stop-color="#fffac2"/><stop offset="0.9167" stop-color="#ffedb8"/><stop offset="1.0000" stop-color="#ffe1ae"/></linearGradient><linearGradient id="cg1" gradientUnits="userSpaceOnUse" x1="428.6" y1="0" x2="703.0" y2="0"><stop offset="0.0000" stop-color="#87ffcf"/><stop offset="0.0833" stop-color="#93ffce"/><stop offset="0.1667" stop-color="#9fffce"/><stop offset="0.2500" stop-color="#abffcd"/><stop offset="0.3333" stop-color="#b7ffcd"/><stop offset="0.4167" stop-color="#c4ffcc"/><stop offset="0.5000" stop-color="#d1ffcc"/><stop offset="0.5833" stop-color="#deffcb"/><stop offset="0.6667" stop-color="#ebffcb"/><stop offset="0.7500" stop-color="#f9ffca"/><stop offset="0.8333" stop-color="#fff7c3"/><stop offset="0.9167" stop-color="#ffeab8"/><stop offset="1.0000" stop-color="#ffdeae"/></linearGradient><linearGradient id="cg2" gradientUnits="userSpaceOnUse" x1="428.6" y1="0" x2="703.0" y2="0"><stop offset="0.0000" stop-color="#8affd2"/><stop offset="0.0833" stop-color="#95ffd2"/><stop offset="0.1667" stop-color="#a1ffd1"/><stop offset="0.2500" stop-color="#aeffd1"/><stop offset="0.3333" stop-color="#baffd0"/><stop offset="0.4167" stop-color="#c7ffd0"/><stop offset="0.5000" stop-color="#d4ffcf"/><stop offset="0.5833" stop-color="#e1ffcf"/><stop offset="0.6667" stop-color="#efffce"/><stop offset="0.7500" stop-color="#fdffcd"/><stop offset="0.8333" stop-color="#fff3c4"/><stop offset="0.9167" stop-color="#ffe7b9"/><stop offset="1.0000" stop-color="#ffdbaf"/></linearGradient><linearGradient id="cg3" gradientUnits="userSpaceOnUse" x1="428.6" y1="0" x2="703.0" y2="0"><stop offset="0.0000" stop-color="#8cffd5"/><stop offset="0.0833" stop-color="#98ffd5"/><stop offset="0.1667" stop-color="#a4ffd4"/><stop offset="0.2500" stop-color="#b0ffd4"/><stop offset="0.3333" stop-color="#bdffd3"/><stop offset="0.4167" stop-color="#caffd3"/><stop offset="0.5000" stop-color="#d7ffd3"/><stop offset="0.5833" stop-color="#e5ffd2"/><stop offset="0.6667" stop-color="#f2ffd2"/><stop offset="0.7500" stop-color="#fffdd0"/><stop offset="0.8333" stop-color="#fff0c4"/><stop offset="0.9167" stop-color="#ffe3b9"/><stop offset="1.0000" stop-color="#ffd8b0"/></linearGradient><linearGradient id="cg4" gradientUnits="userSpaceOnUse" x1="428.6" y1="0" x2="703.0" y2="0"><stop offset="0.0000" stop-color="#8effd9"/><stop offset="0.0833" stop-color="#9affd8"/><stop offset="0.1667" stop-color="#a7ffd8"/><stop offset="0.2500" stop-color="#b3ffd7"/><stop offset="0.3333" stop-color="#c0ffd7"/><stop offset="0.4167" stop-color="#cdffd6"/><stop offset="0.5000" stop-color="#daffd6"/><stop offset="0.5833" stop-color="#e8ffd6"/><stop offset="0.6667" stop-color="#f6ffd5"/><stop offset="0.7500" stop-color="#fffad0"/><stop offset="0.8333" stop-color="#ffecc5"/><stop offset="0.9167" stop-color="#ffe0ba"/><stop offset="1.0000" stop-color="#ffd5b0"/></linearGradient><linearGradient id="cg5" gradientUnits="userSpaceOnUse" x1="428.6" y1="0" x2="703.0" y2="0"><stop offset="0.0000" stop-color="#91ffdc"/><stop offset="0.0833" stop-color="#9dffdc"/><stop offset="0.1667" stop-color="#a9ffdb"/><stop offset="0.2500" stop-color="#b6ffdb"/><stop offset="0.3333" stop-color="#c3ffda"/><stop offset="0.4167" stop-color="#d0ffda"/><stop offset="0.5000" stop-color="#deffda"/><stop offset="0.5833" stop-color="#ebffd9"/><stop offset="0.6667" stop-color="#faffd9"/><stop offset="0.7500" stop-color="#fff6d1"/><stop offset="0.8333" stop-color="#ffe9c5"/><stop offset="0.9167" stop-color="#ffddbb"/><stop offset="1.0000" stop-color="#ffd2b1"/></linearGradient><linearGradient id="cg6" gradientUnits="userSpaceOnUse" x1="428.6" y1="0" x2="703.0" y2="0"><stop offset="0.0000" stop-color="#93ffdf"/><stop offset="0.0833" stop-color="#a0ffdf"/><stop offset="0.1667" stop-color="#acffdf"/><stop offset="0.2500" stop-color="#b9ffde"/><stop offset="0.3333" stop-color="#c6ffde"/><stop offset="0.4167" stop-color="#d3ffde"/><stop offset="0.5000" stop-color="#e1ffdd"/><stop offset="0.5833" stop-color="#efffdd"/><stop offset="0.6667" stop-color="#fdffdc"/><stop offset="0.7500" stop-color="#fff3d1"/><stop offset="0.8333" stop-color="#ffe6c6"/><stop offset="0.9167" stop-color="#ffdabb"/><stop offset="1.0000" stop-color="#ffcfb1"/></linearGradient><linearGradient id="cg7" gradientUnits="userSpaceOnUse" x1="428.6" y1="0" x2="703.0" y2="0"><stop offset="0.0000" stop-color="#96ffe3"/><stop offset="0.0833" stop-color="#a2ffe2"/><stop offset="0.1667" stop-color="#afffe2"/><stop offset="0.2500" stop-color="#bcffe2"/><stop offset="0.3333" stop-color="#c9ffe2"/><stop offset="0.4167" stop-color="#d7ffe1"/><stop offset="0.5000" stop-color="#e4ffe1"/><stop offset="0.5833" stop-color="#f3ffe1"/><stop offset="0.6667" stop-color="#fffdde"/><stop offset="0.7500" stop-color="#ffefd2"/><stop offset="0.8333" stop-color="#ffe2c6"/><stop offset="0.9167" stop-color="#ffd7bc"/><stop offset="1.0000" stop-color="#ffccb2"/></linearGradient><linearGradient id="cg8" gradientUnits="userSpaceOnUse" x1="428.6" y1="0" x2="703.0" y2="0"><stop offset="0.0000" stop-color="#99ffe6"/><stop offset="0.0833" stop-color="#a5ffe6"/><stop offset="0.1667" stop-color="#b2ffe6"/><stop offset="0.2500" stop-color="#bfffe6"/><stop offset="0.3333" stop-color="#ccffe5"/><stop offset="0.4167" stop-color="#daffe5"/><stop offset="0.5000" stop-color="#e8ffe5"/><stop offset="0.5833" stop-color="#f6ffe4"/><stop offset="0.6667" stop-color="#fff9df"/><stop offset="0.7500" stop-color="#ffebd2"/><stop offset="0.8333" stop-color="#ffdfc7"/><stop offset="0.9167" stop-color="#ffd3bc"/><stop offset="1.0000" stop-color="#ffc9b3"/></linearGradient><linearGradient id="cg9" gradientUnits="userSpaceOnUse" x1="428.6" y1="0" x2="703.0" y2="0"><stop offset="0.0000" stop-color="#9bffea"/><stop offset="0.0833" stop-color="#a8ffea"/><stop offset="0.1667" stop-color="#b5ffe9"/><stop offset="0.2500" stop-color="#c2ffe9"/><stop offset="0.3333" stop-color="#cfffe9"/><stop offset="0.4167" stop-color="#ddffe9"/><stop offset="0.5000" stop-color="#ecffe9"/><stop offset="0.5833" stop-color="#faffe8"/><stop offset="0.6667" stop-color="#fff5df"/><stop offset="0.7500" stop-color="#ffe8d3"/><stop offset="0.8333" stop-color="#ffdcc7"/><stop offset="0.9167" stop-color="#ffd0bd"/><stop offset="1.0000" stop-color="#ffc6b3"/></linearGradient><linearGradient id="cg10" gradientUnits="userSpaceOnUse" x1="428.6" y1="0" x2="703.0" y2="0"><stop offset="0.0000" stop-color="#9effee"/><stop offset="0.0833" stop-color="#abffed"/><stop offset="0.1667" stop-color="#b8ffed"/><stop offset="0.2500" stop-color="#c5ffed"/><stop offset="0.3333" stop-color="#d3ffed"/><stop offset="0.4167" stop-color="#e1ffed"/><stop offset="0.5000" stop-color="#efffec"/><stop offset="0.5833" stop-color="#feffec"/><stop offset="0.6667" stop-color="#fff2e0"/><stop offset="0.7500" stop-color="#ffe5d3"/><stop offset="0.8333" stop-color="#ffd8c8"/><stop offset="0.9167" stop-color="#ffcdbd"/><stop offset="1.0000" stop-color="#ffc3b4"/></linearGradient><linearGradient id="cg11" gradientUnits="userSpaceOnUse" x1="428.6" y1="0" x2="703.0" y2="0"><stop offset="0.0000" stop-color="#a1fff1"/><stop offset="0.0833" stop-color="#adfff1"/><stop offset="0.1667" stop-color="#bbfff1"/><stop offset="0.2500" stop-color="#c8fff1"/><stop offset="0.3333" stop-color="#d6fff1"/><stop offset="0.4167" stop-color="#e4fff1"/><stop offset="0.5000" stop-color="#f3fff0"/><stop offset="0.5833" stop-color="#fffcee"/><stop offset="0.6667" stop-color="#ffeee0"/><stop offset="0.7500" stop-color="#ffe1d4"/><stop offset="0.8333" stop-color="#ffd5c9"/><stop offset="0.9167" stop-color="#ffcabe"/><stop offset="1.0000" stop-color="#ffc0b4"/></linearGradient><linearGradient id="cg12" gradientUnits="userSpaceOnUse" x1="428.6" y1="0" x2="703.0" y2="0"><stop offset="0.0000" stop-color="#a3fff5"/><stop offset="0.0833" stop-color="#b0fff5"/><stop offset="0.1667" stop-color="#befff5"/><stop offset="0.2500" stop-color="#cbfff5"/><stop offset="0.3333" stop-color="#dafff5"/><stop offset="0.4167" stop-color="#e8fff5"/><stop offset="0.5000" stop-color="#f7fff4"/><stop offset="0.5833" stop-color="#fff8ee"/><stop offset="0.6667" stop-color="#ffeae1"/><stop offset="0.7500" stop-color="#ffded4"/><stop offset="0.8333" stop-color="#ffd2c9"/><stop offset="0.9167" stop-color="#ffc7bf"/><stop offset="1.0000" stop-color="#ffbdb5"/></linearGradient><linearGradient id="cg13" gradientUnits="userSpaceOnUse" x1="428.6" y1="0" x2="703.0" y2="0"><stop offset="0.0000" stop-color="#a6fff9"/><stop offset="0.0833" stop-color="#b3fff9"/><stop offset="0.1667" stop-color="#c1fff9"/><stop offset="0.2500" stop-color="#cffff9"/><stop offset="0.3333" stop-color="#ddfff9"/><stop offset="0.4167" stop-color="#ecfff9"/><stop offset="0.5000" stop-color="#fbfff9"/><stop offset="0.5833" stop-color="#fff5ee"/><stop offset="0.6667" stop-color="#ffe7e1"/><stop offset="0.7500" stop-color="#ffdad5"/><stop offset="0.8333" stop-color="#ffcfca"/><stop offset="0.9167" stop-color="#ffc4bf"/><stop offset="1.0000" stop-color="#ffbab6"/></linearGradient><linearGradient id="cg14" gradientUnits="userSpaceOnUse" x1="428.6" y1="0" x2="703.0" y2="0"><stop offset="0.0000" stop-color="#a9fffd"/><stop offset="0.0833" stop-color="#b6fffd"/><stop offset="0.1667" stop-color="#c4fffd"/><stop offset="0.2500" stop-color="#d2fffd"/><stop offset="0.3333" stop-color="#e1fffd"/><stop offset="0.4167" stop-color="#effffd"/><stop offset="0.5000" stop-color="#fefffd"/><stop offset="0.5833" stop-color="#fff1ef"/><stop offset="0.6667" stop-color="#ffe3e2"/><stop offset="0.7500" stop-color="#ffd7d5"/><stop offset="0.8333" stop-color="#ffccca"/><stop offset="0.9167" stop-color="#ffc1c0"/><stop offset="1.0000" stop-color="#ffb8b6"/></linearGradient><linearGradient id="cg15" gradientUnits="userSpaceOnUse" x1="428.6" y1="0" x2="703.0" y2="0"><stop offset="0.0000" stop-color="#abfdff"/><stop offset="0.0833" stop-color="#b8fdff"/><stop offset="0.1667" stop-color="#c6fdff"/><stop offset="0.2500" stop-color="#d4fdff"/><stop offset="0.3333" stop-color="#e2fdff"/><stop offset="0.4167" stop-color="#f1fdff"/><stop offset="0.5000" stop-color="#fffcfe"/><stop offset="0.5833" stop-color="#ffedef"/><stop offset="0.6667" stop-color="#ffe0e2"/><stop offset="0.7500" stop-color="#ffd4d6"/><stop offset="0.8333" stop-color="#ffc9cb"/><stop offset="0.9167" stop-color="#ffbec0"/><stop offset="1.0000" stop-color="#ffb5b7"/></linearGradient><linearGradient id="cg16" gradientUnits="userSpaceOnUse" x1="428.6" y1="0" x2="703.0" y2="0"><stop offset="0.0000" stop-color="#abf9ff"/><stop offset="0.0833" stop-color="#b8f9ff"/><stop offset="0.1667" stop-color="#c6f9ff"/><stop offset="0.2500" stop-color="#d4f9ff"/><stop offset="0.3333" stop-color="#e2f9ff"/><stop offset="0.4167" stop-color="#f1f9ff"/><stop offset="0.5000" stop-color="#fff8fe"/><stop offset="0.5833" stop-color="#ffe9f0"/><stop offset="0.6667" stop-color="#ffdce2"/><stop offset="0.7500" stop-color="#ffd1d6"/><stop offset="0.8333" stop-color="#ffc6cb"/><stop offset="0.9167" stop-color="#ffbbc1"/><stop offset="1.0000" stop-color="#ffb2b7"/></linearGradient><linearGradient id="cg17" gradientUnits="userSpaceOnUse" x1="428.6" y1="0" x2="703.0" y2="0"><stop offset="0.0000" stop-color="#abf5ff"/><stop offset="0.0833" stop-color="#b8f5ff"/><stop offset="0.1667" stop-color="#c6f5ff"/><stop offset="0.2500" stop-color="#d4f5ff"/><stop offset="0.3333" stop-color="#e2f5ff"/><stop offset="0.4167" stop-color="#f1f5ff"/><stop offset="0.5000" stop-color="#fff4fe"/><stop offset="0.5833" stop-color="#ffe6f0"/><stop offset="0.6667" stop-color="#ffd9e3"/><stop offset="0.7500" stop-color="#ffcdd7"/><stop offset="0.8333" stop-color="#ffc3cc"/><stop offset="0.9167" stop-color="#ffb9c1"/><stop offset="1.0000" stop-color="#ffafb8"/></linearGradient><linearGradient id="cg18" gradientUnits="userSpaceOnUse" x1="428.6" y1="0" x2="703.0" y2="0"><stop offset="0.0000" stop-color="#abf1ff"/><stop offset="0.0833" stop-color="#b9f1ff"/><stop offset="0.1667" stop-color="#c6f1ff"/><stop offset="0.2500" stop-color="#d4f1ff"/><stop offset="0.3333" stop-color="#e2f1ff"/><stop offset="0.4167" stop-color="#f1f0ff"/><stop offset="0.5000" stop-color="#fff0ff"/><stop offset="0.5833" stop-color="#ffe2f0"/><stop offset="0.6667" stop-color="#ffd6e3"/><stop offset="0.7500" stop-color="#ffcad7"/><stop offset="0.8333" stop-color="#ffc0cc"/><stop offset="0.9167" stop-color="#ffb6c2"/><stop offset="1.0000" stop-color="#ffadb8"/></linearGradient><linearGradient id="cg19" gradientUnits="userSpaceOnUse" x1="428.6" y1="0" x2="703.0" y2="0"><stop offset="0.0000" stop-color="#aceeff"/><stop offset="0.0833" stop-color="#b9edff"/><stop offset="0.1667" stop-color="#c6edff"/><stop offset="0.2500" stop-color="#d4edff"/><stop offset="0.3333" stop-color="#e2edff"/><stop offset="0.4167" stop-color="#f0ecff"/><stop offset="0.5000" stop-color="#ffecff"/><stop offset="0.5833" stop-color="#ffdff1"/><stop offset="0.6667" stop-color="#ffd2e4"/><stop offset="0.7500" stop-color="#ffc7d8"/><stop offset="0.8333" stop-color="#ffbdcd"/><stop offset="0.9167" stop-color="#ffb3c2"/><stop offset="1.0000" stop-color="#ffaab9"/></linearGradient><linearGradient id="cg20" gradientUnits="userSpaceOnUse" x1="428.6" y1="0" x2="703.0" y2="0"><stop offset="0.0000" stop-color="#aceaff"/><stop offset="0.0833" stop-color="#b9eaff"/><stop offset="0.1667" stop-color="#c6e9ff"/><stop offset="0.2500" stop-color="#d4e9ff"/><stop offset="0.3333" stop-color="#e2e9ff"/><stop offset="0.4167" stop-color="#f0e8ff"/><stop offset="0.5000" stop-color="#ffe8ff"/><stop offset="0.5833" stop-color="#ffdbf1"/><stop offset="0.6667" stop-color="#ffcfe4"/><stop offset="0.7500" stop-color="#ffc4d8"/><stop offset="0.8333" stop-color="#ffbacd"/><stop offset="0.9167" stop-color="#ffb0c3"/><stop offset="1.0000" stop-color="#ffa7b9"/></linearGradient><linearGradient id="cg21" gradientUnits="userSpaceOnUse" x1="428.6" y1="0" x2="703.0" y2="0"><stop offset="0.0000" stop-color="#ace6ff"/><stop offset="0.0833" stop-color="#b9e6ff"/><stop offset="0.1667" stop-color="#c6e6ff"/><stop offset="0.2500" stop-color="#d4e5ff"/><stop offset="0.3333" stop-color="#e2e5ff"/><stop offset="0.4167" stop-color="#f0e5ff"/><stop offset="0.5000" stop-color="#fee4ff"/><stop offset="0.5833" stop-color="#ffd8f1"/><stop offset="0.6667" stop-color="#ffcce4"/><stop offset="0.7500" stop-color="#ffc1d9"/><stop offset="0.8333" stop-color="#ffb7ce"/><stop offset="0.9167" stop-color="#ffadc3"/><stop offset="1.0000" stop-color="#ffa5ba"/></linearGradient><linearGradient id="cg22" gradientUnits="userSpaceOnUse" x1="428.6" y1="0" x2="703.0" y2="0"><stop offset="0.0000" stop-color="#ace2ff"/><stop offset="0.0833" stop-color="#b9e2ff"/><stop offset="0.1667" stop-color="#c6e2ff"/><stop offset="0.2500" stop-color="#d4e1ff"/><stop offset="0.3333" stop-color="#e2e1ff"/><stop offset="0.4167" stop-color="#f0e1ff"/><stop offset="0.5000" stop-color="#fee0ff"/><stop offset="0.5833" stop-color="#ffd4f2"/><stop offset="0.6667" stop-color="#ffc8e5"/><stop offset="0.7500" stop-color="#ffbed9"/><stop offset="0.8333" stop-color="#ffb4ce"/><stop offset="0.9167" stop-color="#ffabc4"/><stop offset="1.0000" stop-color="#ffa2ba"/></linearGradient><linearGradient id="cg23" gradientUnits="userSpaceOnUse" x1="428.6" y1="0" x2="703.0" y2="0"><stop offset="0.0000" stop-color="#addfff"/><stop offset="0.0833" stop-color="#b9deff"/><stop offset="0.1667" stop-color="#c6deff"/><stop offset="0.2500" stop-color="#d4deff"/><stop offset="0.3333" stop-color="#e2ddff"/><stop offset="0.4167" stop-color="#f0ddff"/><stop offset="0.5000" stop-color="#fedcff"/><stop offset="0.5833" stop-color="#ffd1f2"/><stop offset="0.6667" stop-color="#ffc5e5"/><stop offset="0.7500" stop-color="#ffbbd9"/><stop offset="0.8333" stop-color="#ffb1ce"/><stop offset="0.9167" stop-color="#ffa8c4"/><stop offset="1.0000" stop-color="#ff9fbb"/></linearGradient><linearGradient id="cg24" gradientUnits="userSpaceOnUse" x1="428.6" y1="0" x2="703.0" y2="0"><stop offset="0.0000" stop-color="#addbff"/><stop offset="0.0833" stop-color="#badbff"/><stop offset="0.1667" stop-color="#c7daff"/><stop offset="0.2500" stop-color="#d4daff"/><stop offset="0.3333" stop-color="#e1d9ff"/><stop offset="0.4167" stop-color="#efd9ff"/><stop offset="0.5000" stop-color="#fed9ff"/><stop offset="0.5833" stop-color="#ffcdf2"/><stop offset="0.6667" stop-color="#ffc2e6"/><stop offset="0.7500" stop-color="#ffb8da"/><stop offset="0.8333" stop-color="#ffaecf"/><stop offset="0.9167" stop-color="#ffa5c5"/><stop offset="1.0000" stop-color="#ff9dbb"/></linearGradient><linearGradient id="cg25" gradientUnits="userSpaceOnUse" x1="428.6" y1="0" x2="703.0" y2="0"><stop offset="0.0000" stop-color="#add8ff"/><stop offset="0.0833" stop-color="#bad7ff"/><stop offset="0.1667" stop-color="#c7d7ff"/><stop offset="0.2500" stop-color="#d4d6ff"/><stop offset="0.3333" stop-color="#e1d6ff"/><stop offset="0.4167" stop-color="#efd5ff"/><stop offset="0.5000" stop-color="#fdd5ff"/><stop offset="0.5833" stop-color="#ffcaf3"/><stop offset="0.6667" stop-color="#ffbfe6"/><stop offset="0.7500" stop-color="#ffb5da"/><stop offset="0.8333" stop-color="#ffabcf"/><stop offset="0.9167" stop-color="#ffa2c5"/><stop offset="1.0000" stop-color="#ff9abc"/></linearGradient><linearGradient id="cg26" gradientUnits="userSpaceOnUse" x1="428.6" y1="0" x2="703.0" y2="0"><stop offset="0.0000" stop-color="#add4ff"/><stop offset="0.0833" stop-color="#bad4ff"/><stop offset="0.1667" stop-color="#c7d3ff"/><stop offset="0.2500" stop-color="#d4d3ff"/><stop offset="0.3333" stop-color="#e1d2ff"/><stop offset="0.4167" stop-color="#efd2ff"/><stop offset="0.5000" stop-color="#fdd1ff"/><stop offset="0.5833" stop-color="#ffc7f3"/><stop offset="0.6667" stop-color="#ffbce6"/><stop offset="0.7500" stop-color="#ffb2db"/><stop offset="0.8333" stop-color="#ffa8d0"/><stop offset="0.9167" stop-color="#ffa0c6"/><stop offset="1.0000" stop-color="#ff98bc"/></linearGradient><linearGradient id="cg27" gradientUnits="userSpaceOnUse" x1="428.6" y1="0" x2="703.0" y2="0"><stop offset="0.0000" stop-color="#add1ff"/><stop offset="0.0833" stop-color="#bad0ff"/><stop offset="0.1667" stop-color="#c7d0ff"/><stop offset="0.2500" stop-color="#d4cfff"/><stop offset="0.3333" stop-color="#e1cfff"/><stop offset="0.4167" stop-color="#efceff"/><stop offset="0.5000" stop-color="#fdcdff"/><stop offset="0.5833" stop-color="#ffc3f3"/><stop offset="0.6667" stop-color="#ffb9e7"/><stop offset="0.7500" stop-color="#ffafdb"/><stop offset="0.8333" stop-color="#ffa6d0"/><stop offset="0.9167" stop-color="#ff9dc6"/><stop offset="1.0000" stop-color="#ff95bd"/></linearGradient><linearGradient id="cg28" gradientUnits="userSpaceOnUse" x1="428.6" y1="0" x2="703.0" y2="0"><stop offset="0.0000" stop-color="#aecdff"/><stop offset="0.0833" stop-color="#bacdff"/><stop offset="0.1667" stop-color="#c7ccff"/><stop offset="0.2500" stop-color="#d4ccff"/><stop offset="0.3333" stop-color="#e1cbff"/><stop offset="0.4167" stop-color="#efcaff"/><stop offset="0.5000" stop-color="#fccaff"/><stop offset="0.5833" stop-color="#ffc0f4"/><stop offset="0.6667" stop-color="#ffb6e7"/><stop offset="0.7500" stop-color="#ffacdc"/><stop offset="0.8333" stop-color="#ffa3d1"/><stop offset="0.9167" stop-color="#ff9bc7"/><stop offset="1.0000" stop-color="#ff93bd"/></linearGradient><linearGradient id="cg29" gradientUnits="userSpaceOnUse" x1="428.6" y1="0" x2="703.0" y2="0"><stop offset="0.0000" stop-color="#aecaff"/><stop offset="0.0833" stop-color="#bac9ff"/><stop offset="0.1667" stop-color="#c7c9ff"/><stop offset="0.2500" stop-color="#d4c8ff"/><stop offset="0.3333" stop-color="#e1c7ff"/><stop offset="0.4167" stop-color="#eec7ff"/><stop offset="0.5000" stop-color="#fcc6ff"/><stop offset="0.5833" stop-color="#ffbdf4"/><stop offset="0.6667" stop-color="#ffb3e8"/><stop offset="0.7500" stop-color="#ffa9dc"/><stop offset="0.8333" stop-color="#ffa0d1"/><stop offset="0.9167" stop-color="#ff98c7"/><stop offset="1.0000" stop-color="#ff90be"/></linearGradient><clipPath id="cclip"><rect x="428.6" y="827.8" width="274.4" height="199.20000000000005"/></clipPath><filter id="vblur" x="-5%" y="-5%" width="110%" height="110%"><feGaussianBlur stdDeviation="0 3"/></filter></defs><g clip-path="url(#cclip)"><g filter="url(#vblur)"><rect x="422.6" y="820.39" width="286.4" height="7.71" fill="url(#cg0)"/><rect x="422.6" y="827.50" width="286.4" height="7.71" fill="url(#cg1)"/><rect x="422.6" y="834.61" width="286.4" height="7.71" fill="url(#cg2)"/><rect x="422.6" y="841.73" width="286.4" height="7.71" fill="url(#cg3)"/><rect x="422.6" y="848.84" width="286.4" height="7.71" fill="url(#cg4)"/><rect x="422.6" y="855.96" width="286.4" height="7.71" fill="url(#cg5)"/><rect x="422.6" y="863.07" width="286.4" height="7.71" fill="url(#cg6)"/><rect x="422.6" y="870.19" width="286.4" height="7.71" fill="url(#cg7)"/><rect x="422.6" y="877.30" width="286.4" height="7.71" fill="url(#cg8)"/><rect x="422.6" y="884.41" width="286.4" height="7.71" fill="url(#cg9)"/><rect x="422.6" y="891.53" width="286.4" height="7.71" fill="url(#cg10)"/><rect x="422.6" y="898.64" width="286.4" height="7.71" fill="url(#cg11)"/><rect x="422.6" y="905.76" width="286.4" height="7.71" fill="url(#cg12)"/><rect x="422.6" y="912.87" width="286.4" height="7.71" fill="url(#cg13)"/><rect x="422.6" y="919.99" width="286.4" height="7.71" fill="url(#cg14)"/><rect x="422.6" y="927.10" width="286.4" height="7.71" fill="url(#cg15)"/><rect x="422.6" y="934.21" width="286.4" height="7.71" fill="url(#cg16)"/><rect x="422.6" y="941.33" width="286.4" height="7.71" fill="url(#cg17)"/><rect x="422.6" y="948.44" width="286.4" height="7.71" fill="url(#cg18)"/><rect x="422.6" y="955.56" width="286.4" height="7.71" fill="url(#cg19)"/><rect x="422.6" y="962.67" width="286.4" height="7.71" fill="url(#cg20)"/><rect x="422.6" y="969.79" width="286.4" height="7.71" fill="url(#cg21)"/><rect x="422.6" y="976.90" width="286.4" height="7.71" fill="url(#cg22)"/><rect x="422.6" y="984.01" width="286.4" height="7.71" fill="url(#cg23)"/><rect x="422.6" y="991.13" width="286.4" height="7.71" fill="url(#cg24)"/><rect x="422.6" y="998.24" width="286.4" height="7.71" fill="url(#cg25)"/><rect x="422.6" y="1005.36" width="286.4" height="7.71" fill="url(#cg26)"/><rect x="422.6" y="1012.47" width="286.4" height="7.71" fill="url(#cg27)"/><rect x="422.6" y="1019.59" width="286.4" height="7.71" fill="url(#cg28)"/><rect x="422.6" y="1026.70" width="286.4" height="7.71" fill="url(#cg29)"/></g><path d="M464.4 1027 Q575 938 703 861.3" stroke="#000" stroke-width="3.2" fill="none"/></g><rect x="428.6" y="827.8" width="274.4" height="199.20000000000005" fill="none" stroke="#9a9a9a" stroke-width="1.4"/><rect x="556.6" y="918.8" width="15.8" height="16.2" fill="#fff" stroke="#000" stroke-width="1.3"/><circle cx="523.8" cy="953.8" r="4.9" fill="rgb(22,22,22)" stroke="#111" stroke-width="1.1"/><circle cx="547.0" cy="936.6" r="4.9" fill="rgb(50,50,50)" stroke="#111" stroke-width="1.1"/><circle cx="543.9" cy="932.8" r="4.9" fill="rgb(84,84,84)" stroke="#111" stroke-width="1.1"/><circle cx="551.0" cy="926.8" r="4.9" fill="rgb(104,104,104)" stroke="#111" stroke-width="1.1"/><circle cx="552.0" cy="926.0" r="4.9" fill="rgb(128,128,128)" stroke="#111" stroke-width="1.1"/><circle cx="550.6" cy="922.8" r="4.9" fill="rgb(153,153,153)" stroke="#111" stroke-width="1.1"/><circle cx="553.0" cy="923.0" r="4.9" fill="rgb(179,179,179)" stroke="#111" stroke-width="1.1"/><circle cx="555.0" cy="923.2" r="4.9" fill="rgb(204,204,204)" stroke="#111" stroke-width="1.1"/><circle cx="557.0" cy="923.3" r="4.9" fill="rgb(230,230,230)" stroke="#111" stroke-width="1.1"/><circle cx="559.4" cy="923.4" r="4.9" fill="rgb(255,255,255)" stroke="#111" stroke-width="1.1"/><path d="M421.2 844.16H428.6" stroke="#d8d8d8" stroke-width="1.4"/><text x="420.40" y="849.76" font-size="15.60" fill="#e0e0e0" text-anchor="end" textLength="32.03" lengthAdjust="spacingAndGlyphs">0,35</text><path d="M421.2 883.78H428.6" stroke="#d8d8d8" stroke-width="1.4"/><text x="420.40" y="889.38" font-size="15.60" fill="#e0e0e0" text-anchor="end" textLength="32.03" lengthAdjust="spacingAndGlyphs">0,34</text><path d="M421.2 923.40H428.6" stroke="#d8d8d8" stroke-width="1.4"/><text x="420.40" y="929.00" font-size="15.60" fill="#e0e0e0" text-anchor="end" textLength="32.03" lengthAdjust="spacingAndGlyphs">0,33</text><path d="M421.2 963.02H428.6" stroke="#d8d8d8" stroke-width="1.4"/><text x="420.40" y="968.62" font-size="15.60" fill="#e0e0e0" text-anchor="end" textLength="32.03" lengthAdjust="spacingAndGlyphs">0,32</text><path d="M421.2 1002.64H428.6" stroke="#d8d8d8" stroke-width="1.4"/><text x="420.40" y="1008.24" font-size="15.60" fill="#e0e0e0" text-anchor="end" textLength="32.03" lengthAdjust="spacingAndGlyphs">0,31</text><path d="M439.50 1027.0V1033.0" stroke="#d8d8d8" stroke-width="1.5"/><text x="439.50" y="1050.60" font-size="15.60" fill="#e0e0e0" text-anchor="middle" textLength="32.03" lengthAdjust="spacingAndGlyphs">0,29</text><path d="M494.15 1027.0V1033.0" stroke="#d8d8d8" stroke-width="1.5"/><text x="494.15" y="1050.60" font-size="15.60" fill="#e0e0e0" text-anchor="middle" textLength="22.88" lengthAdjust="spacingAndGlyphs">0,3</text><path d="M548.80 1027.0V1033.0" stroke="#d8d8d8" stroke-width="1.5"/><text x="548.80" y="1050.60" font-size="15.60" fill="#e0e0e0" text-anchor="middle" textLength="32.03" lengthAdjust="spacingAndGlyphs">0,31</text><path d="M603.45 1027.0V1033.0" stroke="#d8d8d8" stroke-width="1.5"/><text x="603.45" y="1050.60" font-size="15.60" fill="#e0e0e0" text-anchor="middle" textLength="32.03" lengthAdjust="spacingAndGlyphs">0,32</text><path d="M658.10 1027.0V1033.0" stroke="#d8d8d8" stroke-width="1.5"/><text x="658.10" y="1050.60" font-size="15.60" fill="#e0e0e0" text-anchor="middle" textLength="32.03" lengthAdjust="spacingAndGlyphs">0,33</text></svg>
<!-- data table -->
<div style="position:absolute;left:721.60px;top:800.70px;width:1105.60px;height:241.10px;background:#0c0c0c;"></div>
<div style="position:absolute;left:723.20px;top:802.30px;width:1102.40px;height:31.70px;background:linear-gradient(180deg,#2f2f2f 0,#2c2c2c 49.5%,#141414 49.5%,#1d1d1d 100%);"></div>
<span class="t" style="left:935.47px;top:811.48px;font-size:15.50px;color:#ffffff;font-weight:bold;transform:scaleX(1.0500);">0</span>
<span class="t" style="left:1015.28px;top:811.48px;font-size:15.50px;color:#ffffff;font-weight:bold;transform:scaleX(1.0500);">10</span>
<span class="t" style="left:1099.61px;top:811.48px;font-size:15.50px;color:#ffffff;font-weight:bold;transform:scaleX(1.0500);">20</span>
<span class="t" style="left:1183.94px;top:811.48px;font-size:15.50px;color:#ffffff;font-weight:bold;transform:scaleX(1.0500);">30</span>
<span class="t" style="left:1268.27px;top:811.48px;font-size:15.50px;color:#ffffff;font-weight:bold;transform:scaleX(1.0500);">40</span>
<span class="t" style="left:1352.60px;top:811.48px;font-size:15.50px;color:#ffffff;font-weight:bold;transform:scaleX(1.0500);">50</span>
<span class="t" style="left:1436.93px;top:811.48px;font-size:15.50px;color:#ffffff;font-weight:bold;transform:scaleX(1.0500);">60</span>
<span class="t" style="left:1521.26px;top:811.48px;font-size:15.50px;color:#ffffff;font-weight:bold;transform:scaleX(1.0500);">70</span>
<span class="t" style="left:1605.59px;top:811.48px;font-size:15.50px;color:#ffffff;font-weight:bold;transform:scaleX(1.0500);">80</span>
<span class="t" style="left:1689.92px;top:811.48px;font-size:15.50px;color:#ffffff;font-weight:bold;transform:scaleX(1.0500);">90</span>
<span class="t" style="left:1769.72px;top:811.48px;font-size:15.50px;color:#ffffff;font-weight:bold;transform:scaleX(1.0500);">100</span>
<div style="position:absolute;left:723.20px;top:833.90px;width:1102.40px;height:29.76px;background:#424242;"></div>
<span class="t" style="left:736.60px;top:840.96px;font-size:18.00px;color:#ffffff;font-weight:bold;transform:scaleX(0.9685);">x: CIE31</span>
<span class="t" style="left:901.80px;top:840.79px;font-size:18.20px;color:#ffffff;transform:scaleX(0.9800);">0,297</span>
<span class="t" style="left:986.13px;top:840.79px;font-size:18.20px;color:#ffffff;transform:scaleX(0.9800);">0,305</span>
<span class="t" style="left:1070.46px;top:840.79px;font-size:18.20px;color:#ffffff;transform:scaleX(0.9800);">0,309</span>
<span class="t" style="left:1154.79px;top:840.79px;font-size:18.20px;color:#ffffff;transform:scaleX(0.9800);">0,309</span>
<span class="t" style="left:1239.12px;top:840.79px;font-size:18.20px;color:#ffffff;transform:scaleX(0.9800);">0,310</span>
<span class="t" style="left:1323.45px;top:840.79px;font-size:18.20px;color:#ffffff;transform:scaleX(0.9800);">0,311</span>
<span class="t" style="left:1407.78px;top:840.79px;font-size:18.20px;color:#ffffff;transform:scaleX(0.9800);">0,310</span>
<span class="t" style="left:1492.11px;top:840.79px;font-size:18.20px;color:#ffffff;transform:scaleX(0.9800);">0,311</span>
<span class="t" style="left:1576.44px;top:840.79px;font-size:18.20px;color:#ffffff;transform:scaleX(0.9800);">0,311</span>
<span class="t" style="left:1660.77px;top:840.79px;font-size:18.20px;color:#ffffff;transform:scaleX(0.9800);">0,311</span>
<span class="t" style="left:1745.10px;top:840.79px;font-size:18.20px;color:#ffffff;transform:scaleX(0.9800);">0,312</span>
<div style="position:absolute;left:723.20px;top:863.56px;width:1102.40px;height:29.76px;background:#828282;"></div>
<span class="t" style="left:736.60px;top:870.62px;font-size:18.00px;color:#eeeeee;font-weight:bold;transform:scaleX(0.9685);">y: CIE31</span>
<span class="t" style="left:901.80px;top:870.45px;font-size:18.20px;color:#eeeeee;transform:scaleX(0.9800);">0,270</span>
<span class="t" style="left:986.13px;top:870.45px;font-size:18.20px;color:#eeeeee;transform:scaleX(0.9800);">0,322</span>
<span class="t" style="left:1070.46px;top:870.45px;font-size:18.20px;color:#eeeeee;transform:scaleX(0.9800);">0,326</span>
<span class="t" style="left:1154.79px;top:870.45px;font-size:18.20px;color:#eeeeee;transform:scaleX(0.9800);">0,327</span>
<span class="t" style="left:1239.12px;top:870.45px;font-size:18.20px;color:#eeeeee;transform:scaleX(0.9800);">0,329</span>
<span class="t" style="left:1323.45px;top:870.45px;font-size:18.20px;color:#eeeeee;transform:scaleX(0.9800);">0,329</span>
<span class="t" style="left:1407.78px;top:870.45px;font-size:18.20px;color:#eeeeee;transform:scaleX(0.9800);">0,329</span>
<span class="t" style="left:1492.11px;top:870.45px;font-size:18.20px;color:#eeeeee;transform:scaleX(0.9800);">0,330</span>
<span class="t" style="left:1576.44px;top:870.45px;font-size:18.20px;color:#eeeeee;transform:scaleX(0.9800);">0,330</span>
<span class="t" style="left:1660.77px;top:870.45px;font-size:18.20px;color:#eeeeee;transform:scaleX(0.9800);">0,330</span>
<span class="t" style="left:1745.10px;top:870.45px;font-size:18.20px;color:#eeeeee;transform:scaleX(0.9800);">0,330</span>
<div style="position:absolute;left:723.20px;top:893.22px;width:1102.40px;height:29.76px;background:#424242;"></div>
<span class="t" style="left:736.60px;top:900.28px;font-size:18.00px;color:#ffffff;font-weight:bold;transform:scaleX(0.9828);">Y</span>
<span class="t" style="left:901.80px;top:900.11px;font-size:18.20px;color:#ffffff;transform:scaleX(0.9800);">0,230</span>
<span class="t" style="left:986.13px;top:900.11px;font-size:18.20px;color:#ffffff;transform:scaleX(0.9800);">3,228</span>
<span class="t" style="left:1070.46px;top:900.11px;font-size:18.20px;color:#ffffff;transform:scaleX(0.9800);">14,517</span>
<span class="t" style="left:1154.79px;top:900.11px;font-size:18.20px;color:#ffffff;transform:scaleX(0.9800);">37,495</span>
<span class="t" style="left:1239.12px;top:900.11px;font-size:18.20px;color:#ffffff;transform:scaleX(0.9800);">73,053</span>
<span class="t" style="left:1323.45px;top:900.11px;font-size:18.20px;color:#ffffff;transform:scaleX(0.9800);">121,259</span>
<span class="t" style="left:1407.78px;top:900.11px;font-size:18.20px;color:#ffffff;transform:scaleX(0.9800);">181,060</span>
<span class="t" style="left:1492.11px;top:900.11px;font-size:18.20px;color:#ffffff;transform:scaleX(0.9800);">253,309</span>
<span class="t" style="left:1576.44px;top:900.11px;font-size:18.20px;color:#ffffff;transform:scaleX(0.9800);">345,102</span>
<span class="t" style="left:1660.77px;top:900.11px;font-size:18.20px;color:#ffffff;transform:scaleX(0.9800);">453,361</span>
<span class="t" style="left:1745.10px;top:900.11px;font-size:18.20px;color:#ffffff;transform:scaleX(0.9800);">570,964</span>
<div style="position:absolute;left:723.20px;top:922.88px;width:1102.40px;height:29.76px;background:#828282;"></div>
<span class="t" style="left:736.60px;top:929.94px;font-size:18.00px;color:#eeeeee;font-weight:bold;transform:scaleX(1.0361);">Target Y</span>
<span class="t" style="left:901.80px;top:929.77px;font-size:18.20px;color:#eeeeee;transform:scaleX(0.9800);">0,000</span>
<span class="t" style="left:986.13px;top:929.77px;font-size:18.20px;color:#eeeeee;transform:scaleX(0.9800);">5,898</span>
<span class="t" style="left:1070.46px;top:929.77px;font-size:18.20px;color:#eeeeee;transform:scaleX(0.9800);">18,902</span>
<span class="t" style="left:1154.79px;top:929.77px;font-size:18.20px;color:#eeeeee;transform:scaleX(0.9800);">41,265</span>
<span class="t" style="left:1239.12px;top:929.77px;font-size:18.20px;color:#eeeeee;transform:scaleX(0.9800);">75,863</span>
<span class="t" style="left:1323.45px;top:929.77px;font-size:18.20px;color:#eeeeee;transform:scaleX(0.9800);">123,249</span>
<span class="t" style="left:1407.78px;top:929.77px;font-size:18.20px;color:#eeeeee;transform:scaleX(0.9800);">181,879</span>
<span class="t" style="left:1492.11px;top:929.77px;font-size:18.20px;color:#eeeeee;transform:scaleX(0.9800);">254,194</span>
<span class="t" style="left:1576.44px;top:929.77px;font-size:18.20px;color:#eeeeee;transform:scaleX(0.9800);">344,764</span>
<span class="t" style="left:1660.77px;top:929.77px;font-size:18.20px;color:#eeeeee;transform:scaleX(0.9800);">451,803</span>
<span class="t" style="left:1745.10px;top:929.77px;font-size:18.20px;color:#eeeeee;transform:scaleX(0.9800);">570,964</span>
<div style="position:absolute;left:723.20px;top:952.54px;width:1102.40px;height:29.76px;background:#424242;"></div>
<span class="t" style="left:736.60px;top:959.60px;font-size:18.00px;color:#ffffff;font-weight:bold;transform:scaleX(1.0352);">Gamma Log/Log</span>
<span class="t" style="left:901.80px;top:959.43px;font-size:18.20px;color:#ffffff;transform:scaleX(0.9800);">1,278</span>
<span class="t" style="left:986.13px;top:959.43px;font-size:18.20px;color:#ffffff;transform:scaleX(0.9800);">2,267</span>
<span class="t" style="left:1070.46px;top:959.43px;font-size:18.20px;color:#ffffff;transform:scaleX(0.9800);">2,282</span>
<span class="t" style="left:1154.79px;top:959.43px;font-size:18.20px;color:#ffffff;transform:scaleX(0.9800);">2,250</span>
<span class="t" style="left:1239.12px;top:959.43px;font-size:18.20px;color:#ffffff;transform:scaleX(0.9800);">2,244</span>
<span class="t" style="left:1323.45px;top:959.43px;font-size:18.20px;color:#ffffff;transform:scaleX(0.9800);">2,248</span>
<span class="t" style="left:1407.78px;top:959.43px;font-size:18.20px;color:#ffffff;transform:scaleX(0.9800);">2,248</span>
<span class="t" style="left:1492.11px;top:959.43px;font-size:18.20px;color:#ffffff;transform:scaleX(0.9800);">2,261</span>
<span class="t" style="left:1576.44px;top:959.43px;font-size:18.20px;color:#ffffff;transform:scaleX(0.9800);">2,256</span>
<span class="t" style="left:1660.77px;top:959.43px;font-size:18.20px;color:#ffffff;transform:scaleX(0.9800);">2,235</span>
<span class="t" style="left:1745.10px;top:959.43px;font-size:18.20px;color:#ffffff;transform:scaleX(0.9800);">2,275</span>
<div style="position:absolute;left:723.20px;top:982.20px;width:1102.40px;height:29.76px;background:#828282;"></div>
<span class="t" style="left:736.60px;top:989.26px;font-size:18.00px;color:#eeeeee;font-weight:bold;transform:scaleX(0.8893);">CCT</span>
<span class="t" style="left:901.80px;top:989.09px;font-size:18.20px;color:#eeeeee;transform:scaleX(0.9800);">9020,000</span>
<span class="t" style="left:986.13px;top:989.09px;font-size:18.20px;color:#eeeeee;transform:scaleX(0.9800);">6986,000</span>
<span class="t" style="left:1070.46px;top:989.09px;font-size:18.20px;color:#eeeeee;transform:scaleX(0.9800);">6707,000</span>
<span class="t" style="left:1154.79px;top:989.09px;font-size:18.20px;color:#eeeeee;transform:scaleX(0.9800);">6717,000</span>
<span class="t" style="left:1239.12px;top:989.09px;font-size:18.20px;color:#eeeeee;transform:scaleX(0.9800);">6634,000</span>
<span class="t" style="left:1323.45px;top:989.09px;font-size:18.20px;color:#eeeeee;transform:scaleX(0.9800);">6625,000</span>
<span class="t" style="left:1407.78px;top:989.09px;font-size:18.20px;color:#eeeeee;transform:scaleX(0.9800);">6636,000</span>
<span class="t" style="left:1492.11px;top:989.09px;font-size:18.20px;color:#eeeeee;transform:scaleX(0.9800);">6593,000</span>
<span class="t" style="left:1576.44px;top:989.09px;font-size:18.20px;color:#eeeeee;transform:scaleX(0.9800);">6570,000</span>
<span class="t" style="left:1660.77px;top:989.09px;font-size:18.20px;color:#eeeeee;transform:scaleX(0.9800);">6573,000</span>
<span class="t" style="left:1745.10px;top:989.09px;font-size:18.20px;color:#eeeeee;transform:scaleX(0.9800);">6537,000</span>
<div style="position:absolute;left:723.20px;top:1011.86px;width:1102.40px;height:29.76px;background:#424242;"></div>
<span class="t" style="left:736.60px;top:1018.92px;font-size:18.00px;color:#ffffff;font-weight:bold;transform:scaleX(1.0230);">ΔE 2000</span>
<span class="t" style="left:901.80px;top:1018.75px;font-size:18.20px;color:#ffffff;transform:scaleX(0.9800);">0,507</span>
<span class="t" style="left:986.13px;top:1018.75px;font-size:18.20px;color:#ffffff;transform:scaleX(0.9800);">2,592</span>
<span class="t" style="left:1070.46px;top:1018.75px;font-size:18.20px;color:#ffffff;transform:scaleX(0.9800);">2,222</span>
<span class="t" style="left:1154.79px;top:1018.75px;font-size:18.20px;color:#ffffff;transform:scaleX(0.9800);">1,470</span>
<span class="t" style="left:1239.12px;top:1018.75px;font-size:18.20px;color:#ffffff;transform:scaleX(0.9800);">1,333</span>
<span class="t" style="left:1323.45px;top:1018.75px;font-size:18.20px;color:#ffffff;transform:scaleX(0.9800);">1,102</span>
<span class="t" style="left:1407.78px;top:1018.75px;font-size:18.20px;color:#ffffff;transform:scaleX(0.9800);">1,223</span>
<span class="t" style="left:1492.11px;top:1018.75px;font-size:18.20px;color:#ffffff;transform:scaleX(0.9800);">1,291</span>
<span class="t" style="left:1576.44px;top:1018.75px;font-size:18.20px;color:#ffffff;transform:scaleX(0.9800);">1,158</span>
<span class="t" style="left:1660.77px;top:1018.75px;font-size:18.20px;color:#ffffff;transform:scaleX(0.9800);">1,350</span>
<span class="t" style="left:1745.10px;top:1018.75px;font-size:18.20px;color:#ffffff;transform:scaleX(0.9800);">1,198</span>
<!-- bottom level strip -->
<div style="position:absolute;left:0.00px;top:1113.00px;width:1920.00px;height:53.00px;background:linear-gradient(180deg,#4a4a4a 0,#3a3a3a 35%,#242424 100%);"></div>
<div style="position:absolute;left:0.00px;top:1164.20px;width:1920.00px;height:1.80px;background:#1c1c1c;"></div>
<div style="position:absolute;left:1.90px;top:1113.00px;width:125.30px;height:51.20px;background:linear-gradient(180deg,#909090 0,#7c7c7c 40%,#565656 100%);border-radius:5px;box-shadow:inset 0 1px 0 #a8a8a8, inset 1px 0 0 #8a8a8a;"><div style="position:absolute;left:4.2px;top:4.6px;width:116.9px;height:29.8px;border-radius:3.5px;background:rgb(0,0,0);box-shadow:0 0 1.5px rgba(0,0,0,.55);"></div></div>
<span class="t" style="left:62.05px;top:1152.45px;font-size:8.80px;color:#2c2c2c;font-weight:bold;">0</span>
<div style="position:absolute;left:129.15px;top:1113.00px;width:125.30px;height:51.20px;background:linear-gradient(180deg,#909090 0,#7c7c7c 40%,#565656 100%);border-radius:5px;box-shadow:inset 0 1px 0 #a8a8a8, inset 1px 0 0 #8a8a8a;"><div style="position:absolute;left:4.2px;top:4.6px;width:116.9px;height:29.8px;border-radius:3.5px;background:rgb(26,26,26);box-shadow:0 0 1.5px rgba(0,0,0,.55);"></div></div>
<span class="t" style="left:186.86px;top:1152.45px;font-size:8.80px;color:#2c2c2c;font-weight:bold;">10</span>
<div style="position:absolute;left:256.40px;top:1113.00px;width:125.30px;height:51.20px;background:linear-gradient(180deg,#909090 0,#7c7c7c 40%,#565656 100%);border-radius:5px;box-shadow:inset 0 1px 0 #a8a8a8, inset 1px 0 0 #8a8a8a;"><div style="position:absolute;left:4.2px;top:4.6px;width:116.9px;height:29.8px;border-radius:3.5px;background:rgb(51,51,51);box-shadow:0 0 1.5px rgba(0,0,0,.55);"></div></div>
<span class="t" style="left:314.11px;top:1152.45px;font-size:8.80px;color:#2c2c2c;font-weight:bold;">20</span>
<div style="position:absolute;left:383.65px;top:1113.00px;width:125.30px;height:51.20px;background:linear-gradient(180deg,#909090 0,#7c7c7c 40%,#565656 100%);border-radius:5px;box-shadow:inset 0 1px 0 #a8a8a8, inset 1px 0 0 #8a8a8a;"><div style="position:absolute;left:4.2px;top:4.6px;width:116.9px;height:29.8px;border-radius:3.5px;background:rgb(77,77,77);box-shadow:0 0 1.5px rgba(0,0,0,.55);"></div></div>
<span class="t" style="left:441.36px;top:1152.45px;font-size:8.80px;color:#2c2c2c;font-weight:bold;">30</span>
<div style="position:absolute;left:510.90px;top:1113.00px;width:125.30px;height:51.20px;background:linear-gradient(180deg,#909090 0,#7c7c7c 40%,#565656 100%);border-radius:5px;box-shadow:inset 0 1px 0 #a8a8a8, inset 1px 0 0 #8a8a8a;"><div style="position:absolute;left:4.2px;top:4.6px;width:116.9px;height:29.8px;border-radius:3.5px;background:rgb(102,102,102);box-shadow:0 0 1.5px rgba(0,0,0,.55);"></div></div>
<span class="t" style="left:568.61px;top:1152.45px;font-size:8.80px;color:#2c2c2c;font-weight:bold;">40</span>
<div style="position:absolute;left:638.15px;top:1113.00px;width:125.30px;height:51.20px;background:linear-gradient(180deg,#909090 0,#7c7c7c 40%,#565656 100%);border-radius:5px;box-shadow:inset 0 1px 0 #a8a8a8, inset 1px 0 0 #8a8a8a;"><div style="position:absolute;left:4.2px;top:4.6px;width:116.9px;height:29.8px;border-radius:3.5px;background:rgb(128,128,128);box-shadow:0 0 1.5px rgba(0,0,0,.55);"></div></div>
<span class="t" style="left:695.86px;top:1152.45px;font-size:8.80px;color:#2c2c2c;font-weight:bold;">50</span>
<div style="position:absolute;left:765.40px;top:1113.00px;width:125.30px;height:51.20px;background:linear-gradient(180deg,#909090 0,#7c7c7c 40%,#565656 100%);border-radius:5px;box-shadow:inset 0 1px 0 #a8a8a8, inset 1px 0 0 #8a8a8a;"><div style="position:absolute;left:4.2px;top:4.6px;width:116.9px;height:29.8px;border-radius:3.5px;background:rgb(153,153,153);box-shadow:0 0 1.5px rgba(0,0,0,.55);"></div></div>
<span class="t" style="left:823.11px;top:1152.45px;font-size:8.80px;color:#2c2c2c;font-weight:bold;">60</span>
<div style="position:absolute;left:892.65px;top:1113.00px;width:125.30px;height:51.20px;background:linear-gradient(180deg,#909090 0,#7c7c7c 40%,#565656 100%);border-radius:5px;box-shadow:inset 0 1px 0 #a8a8a8, inset 1px 0 0 #8a8a8a;"><div style="position:absolute;left:4.2px;top:4.6px;width:116.9px;height:29.8px;border-radius:3.5px;background:rgb(179,179,179);box-shadow:0 0 1.5px rgba(0,0,0,.55);"></div></div>
<span class="t" style="left:950.36px;top:1152.45px;font-size:8.80px;color:#2c2c2c;font-weight:bold;">70</span>
<div style="position:absolute;left:1019.90px;top:1113.00px;width:125.30px;height:51.20px;background:linear-gradient(180deg,#909090 0,#7c7c7c 40%,#565656 100%);border-radius:5px;box-shadow:inset 0 1px 0 #a8a8a8, inset 1px 0 0 #8a8a8a;"><div style="position:absolute;left:4.2px;top:4.6px;width:116.9px;height:29.8px;border-radius:3.5px;background:rgb(204,204,204);box-shadow:0 0 1.5px rgba(0,0,0,.55);"></div></div>
<span class="t" style="left:1077.61px;top:1152.45px;font-size:8.80px;color:#2c2c2c;font-weight:bold;">80</span>
<div style="position:absolute;left:1147.15px;top:1113.00px;width:125.30px;height:51.20px;background:linear-gradient(180deg,#909090 0,#7c7c7c 40%,#565656 100%);border-radius:5px;box-shadow:inset 0 1px 0 #a8a8a8, inset 1px 0 0 #8a8a8a;"><div style="position:absolute;left:4.2px;top:4.6px;width:116.9px;height:29.8px;border-radius:3.5px;background:rgb(230,230,230);box-shadow:0 0 1.5px rgba(0,0,0,.55);"></div></div>
<span class="t" style="left:1204.86px;top:1152.45px;font-size:8.80px;color:#2c2c2c;font-weight:bold;">90</span>
<div style="position:absolute;left:1274.40px;top:1113.00px;width:125.30px;height:51.20px;background:linear-gradient(180deg,#161616 0,#222 45%,#3a3a3a 100%);border-radius:5px;"><div style="position:absolute;left:4.2px;top:4.6px;width:116.9px;height:29.8px;border-radius:3.5px;background:rgb(255,255,255);box-shadow:0 0 1.5px rgba(0,0,0,.55);"></div></div>
<span class="t" style="left:1329.66px;top:1152.45px;font-size:8.80px;color:#ffffff;font-weight:bold;">100</span>
<!-- transport controls -->
<div style="position:absolute;left:1649.00px;top:1112.80px;width:39.40px;height:14.40px;background:linear-gradient(180deg,#a2a2a2 0,#868686 55%,#6c6c6c 100%);border-radius:4px 4px 0 0;box-shadow:inset 0 1px 0 #b8b8b8;"></div>
<div style="position:absolute;left:1649.00px;top:1128.80px;width:39.40px;height:35.60px;background:linear-gradient(180deg,#8e8e8e,#6c6c6c);border-radius:0 0 4px 4px;"></div>
<div style="position:absolute;left:1880.00px;top:1112.80px;width:38.20px;height:25.60px;background:linear-gradient(180deg,#242424,#3c3c3c);"></div>
<div style="position:absolute;left:1690.20px;top:1112.80px;width:37.40px;height:25.20px;background:linear-gradient(180deg,#a2a2a2 0,#868686 55%,#6c6c6c 100%);border-radius:3px 0 0 0;box-shadow:inset 0 1px 0 #b8b8b8;"></div>
<div style="position:absolute;left:1728.60px;top:1112.80px;width:37.20px;height:25.20px;background:linear-gradient(180deg,#a2a2a2 0,#868686 55%,#6c6c6c 100%);border-radius:0;box-shadow:inset 0 1px 0 #b8b8b8;"></div>
<div style="position:absolute;left:1766.80px;top:1112.80px;width:37.00px;height:25.20px;background:linear-gradient(180deg,#a2a2a2 0,#868686 55%,#6c6c6c 100%);border-radius:0;box-shadow:inset 0 1px 0 #b8b8b8;"></div>
<div style="position:absolute;left:1804.80px;top:1112.80px;width:36.60px;height:25.20px;background:linear-gradient(180deg,#a2a2a2 0,#868686 55%,#6c6c6c 100%);border-radius:0;box-shadow:inset 0 1px 0 #b8b8b8;"></div>
<div style="position:absolute;left:1842.40px;top:1112.80px;width:36.00px;height:25.20px;background:linear-gradient(180deg,#a2a2a2 0,#868686 55%,#6c6c6c 100%);border-radius:0 3px 0 0;box-shadow:inset 0 1px 0 #b8b8b8;"></div>
<div style="position:absolute;left:1690.20px;top:1139.40px;width:114.00px;height:24.80px;background:linear-gradient(180deg,#a2a2a2 0,#868686 55%,#6c6c6c 100%);border-radius:4px 0 0 4px;box-shadow:inset 0 1px 0 #bcbcbc;"></div>
<div style="position:absolute;left:1805.40px;top:1139.40px;width:112.80px;height:24.80px;background:linear-gradient(180deg,#a2a2a2 0,#868686 55%,#6c6c6c 100%);border-radius:0 4px 4px 0;box-shadow:inset 0 1px 0 #bcbcbc;"></div>
<svg class="ov" width="1920" height="1166" viewBox="0 0 1920 1166"><defs><linearGradient id="kb" x1="0" y1="0" x2="0" y2="1"><stop offset="0" stop-color="#757575"/><stop offset="1" stop-color="#adadad"/></linearGradient><linearGradient id="kd" x1="0" y1="0" x2="0" y2="1"><stop offset="0" stop-color="#2c2c2c"/><stop offset="1" stop-color="#444"/></linearGradient><linearGradient id="sb" x1="0" y1="0" x2="0" y2="1"><stop offset="0" stop-color="#b4b4b4"/><stop offset="0.5" stop-color="#a8a8a8"/><stop offset="0.5" stop-color="#8a8a8a"/><stop offset="1" stop-color="#8e8e8e"/></linearGradient></defs><circle cx="1668.6" cy="1120.2" r="5.8" fill="url(#kb)" opacity="0.85"/><path d="M1664.4 1122.2h8.4l-4.2-4.6z" fill="#333"/><rect x="1656.4" y="1134.4" width="24.6" height="24.4" rx="3" fill="url(#sb)" stroke="#1e1e1e" stroke-width="1.8"/><rect x="1662.9" y="1140.8" width="12.0" height="11.4" fill="#0a0a0a"/><circle cx="1708.8" cy="1125.4" r="8.5" fill="url(#kb)" opacity="0.8"/><circle cx="1747.2" cy="1125.4" r="8.5" fill="url(#kb)" opacity="0.8"/><circle cx="1785.2" cy="1125.4" r="8.5" fill="url(#kb)" opacity="0.8"/><circle cx="1823.2" cy="1125.4" r="8.5" fill="url(#kb)" opacity="0.8"/><circle cx="1860.6" cy="1125.4" r="8.5" fill="url(#kb)" opacity="0.8"/><rect x="1705.6" y="1122.2" width="6.6" height="6.6" fill="#2c2c2c"/><path d="M1744.9 1121.2v8.6l7.4-4.3z" fill="#2a2a2a"/><path d="M1783.2 1121.2h-2.2v8.4h2.2M1787.4 1121.2h2.2v8.4h-2.2" stroke="#2a2a2a" stroke-width="1.7" fill="none"/><path d="M1783.6 1125.4h1.2M1785.9 1125.4h1.2" stroke="#2a2a2a" stroke-width="1.4"/><path d="M1823.2 1125.4c-1.5-2.6-5-2.6-5 0s3.5 2.6 5 0c1.5-2.6 5-2.6 5 0s-3.5 2.6-5 0z" stroke="#2a2a2a" stroke-width="1.6" fill="none"/><path d="M1856.4 1124.4a4.4 4.4 0 0 1 7.6-2.2M1864.8 1126.4a4.4 4.4 0 0 1-7.6 2.2" stroke="#2a2a2a" stroke-width="2" fill="none"/><path d="M1866 1119.8v4.2h-4.2zM1855.2 1131v-4.2h4.2z" fill="#2a2a2a"/><circle cx="1898.2" cy="1125.3" r="8.6" fill="url(#kd)"/><circle cx="1714.6" cy="1152" r="8.4" fill="url(#kb)" opacity="0.8"/><path d="M1713.6 1148.2l-3.2 3.8 3.2 3.8M1718.2 1148.2l-3.2 3.8 3.2 3.8" stroke="#333" stroke-width="1.4" fill="none"/><circle cx="1893.6" cy="1152" r="8.4" fill="url(#kb)" opacity="0.8"/><path d="M1890.4 1148.2l3.2 3.8-3.2 3.8M1895 1148.2l3.2 3.8-3.2 3.8" stroke="#333" stroke-width="1.4" fill="none"/></svg>
<span class="t" style="left:1737.60px;top:1141.03px;font-size:20.40px;color:#2a2a2a;transform:scaleX(0.9393);">Back</span>
<span class="t" style="left:1826.60px;top:1141.03px;font-size:20.40px;color:#2a2a2a;transform:scaleX(1.0347);">Next</span>
</body></html>
